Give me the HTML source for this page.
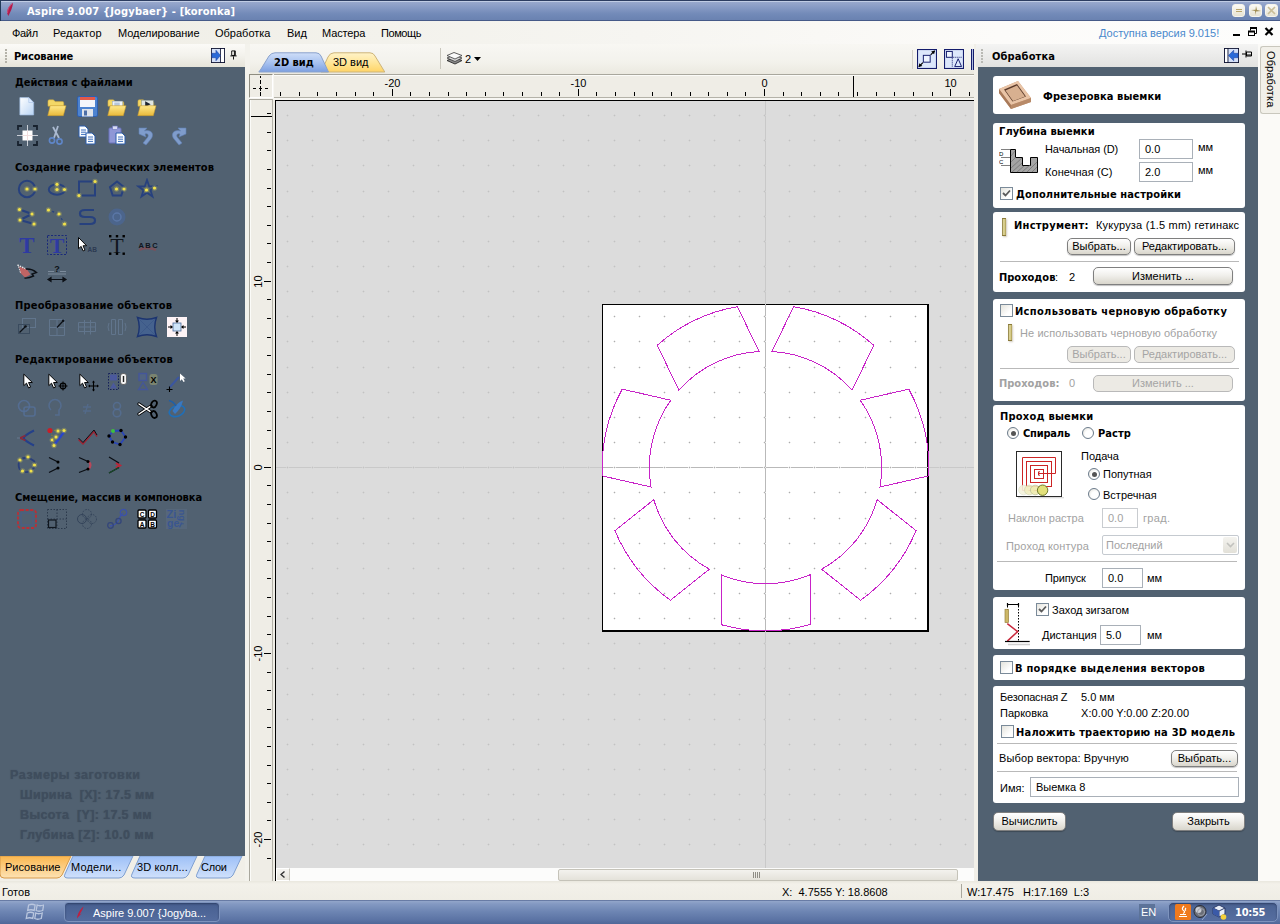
<!DOCTYPE html><html lang="ru"><head><meta charset="utf-8"><title>Aspire 9.007 {Jogybaer} - [koronka]</title><style>
*{box-sizing:border-box;margin:0;padding:0}
html,body{width:1280px;height:924px;overflow:hidden;background:#efede5}
body{font-family:"Liberation Sans",sans-serif;font-size:11px;color:#000;position:relative;line-height:13px}
.a{position:absolute}
.b{font-family:"DejaVu Sans Condensed","Liberation Sans",sans-serif;font-weight:bold;font-size:11px}
.t{position:absolute;white-space:nowrap;line-height:13px;height:13px}
.card{position:absolute;background:#fff;border-radius:3px}
.inp{position:absolute;background:#fff;border:1px solid #a9b0b8;height:20px;padding:3px 0 0 5px;line-height:13px;white-space:nowrap}
.btn{position:absolute;border:1px solid #7f7f7f;border-radius:5px;background:linear-gradient(#ffffff,#f1f0ec 45%,#d9d6cc);text-align:center;white-space:nowrap;line-height:15px;box-shadow:0 1px 1px rgba(0,0,0,.25)}
.btn.dis{color:#a5a5a5;border-color:#b9b9b9;background:#eceae4;box-shadow:none}
.cb{position:absolute;width:13px;height:13px;border:1px solid #7a8a99;background:linear-gradient(135deg,#e4e3dc,#ffffff 70%)}
.rd{position:absolute;width:12px;height:12px;border:1px solid #6b7b8b;border-radius:50%;background:radial-gradient(circle at 60% 60%,#ffffff 40%,#dddcd4)}
.sep{position:absolute;height:1px;background:#b9b9b9}
.g{color:#a2a2a2}
.hd{position:absolute;white-space:nowrap;line-height:13px;color:#000}
</style></head><body>
<div class="a" style="left:0;top:0;width:1280px;height:21px;background:linear-gradient(#2c3c60 0,#2c3c60 1px,#c0cce4 1px,#c0cce4 2px,#98a8cc 2px,#8599c3 8px,#728ab8 14px,#6a82b1 20px,#465a88 20px,#465a88 21px);border-left:1px solid #223a58"></div>
<svg class="a" style="left:0;top:0" width="20" height="20" viewBox="0 0 20 20"><path d="M13 2.800C10 4.500 6.800 9 7.100 13L8.300 15.900C10.200 12.500 12.600 8 13 2.800Z" fill="#b21a4a"/><path d="M12.500 3.500C10 5.500 7.500 9 7.500 13" stroke="#d8608a" stroke-width=".7" fill="none"/></svg>
<div class="t b" style="left:27px;top:5px;letter-spacing:0.169px;color:#fff">Aspire 9.007 {Jogybaer} - [koronka]</div>
<div class="a" style="left:1232px;top:4px;width:13px;height:13px;border-radius:3px;background:linear-gradient(#fbfaf5,#e6e2d2);border:1px solid #f6f4ec"></div>
<div class="a" style="left:1249px;top:4px;width:13px;height:13px;border-radius:3px;background:linear-gradient(#fbfaf5,#e6e2d2);border:1px solid #f6f4ec"></div>
<div class="a" style="left:1265px;top:4px;width:13px;height:13px;border-radius:3px;background:linear-gradient(#fbfaf5,#e6e2d2);border:1px solid #f6f4ec"></div>
<div class="a" style="left:1236px;top:9px;width:6px;height:3px;border-top:1px solid #b9a56c;border-bottom:1px solid #b9a56c"></div>
<svg class="a" style="left:1251px;top:6px" width="10" height="9" viewBox="0 0 10 9"><path d="M5 0L6 4L10 5L5 5.5L4.5 9L4 5L0 4L4.5 3.8Z" fill="#a08c50"/></svg>
<svg class="a" style="left:1267px;top:6px" width="9" height="9" viewBox="0 0 9 9"><path d="M1 1L8 8M8 1L1 8" stroke="#c9bd98" stroke-width="1.6"/></svg>
<div class="a" style="left:0;top:21px;width:1280px;height:23px;background:linear-gradient(90deg,#efede5 0,#f3f2ec 30%,#f6f5f1 50%,#fcfbf9 78%,#fdfdfc)"></div>
<div class="t " style="left:12px;top:27px;letter-spacing:-0.312px;">Файл</div>
<div class="t " style="left:53px;top:27px;letter-spacing:0.18px;">Редактор</div>
<div class="t " style="left:118px;top:27px;letter-spacing:-0.062px;">Моделирование</div>
<div class="t " style="left:215px;top:27px;">Обработка</div>
<div class="t " style="left:287px;top:27px;">Вид</div>
<div class="t " style="left:322px;top:27px;letter-spacing:-0.139px;">Мастера</div>
<div class="t " style="left:381px;top:27px;letter-spacing:-0.417px;">Помощь</div>
<div class="t " style="left:1099px;top:27px;color:#4888cc">Доступна версия 9.015!</div>
<div class="a" style="left:1233px;top:34px;width:7px;height:2px;background:#000"></div>
<svg class="a" style="left:1247px;top:27px" width="11" height="10" viewBox="0 0 11 10"><path d="M3.5 1.5H9.5V6.5H7.5M3.5 1.5V3.5" fill="none" stroke="#000" stroke-width="1"/><path d="M3 1H10" stroke="#000" stroke-width="2"/><rect x="1.5" y="4.5" width="6" height="4" fill="none" stroke="#000"/><path d="M1 4.5H8" stroke="#000" stroke-width="2"/></svg>
<svg class="a" style="left:1264px;top:27px" width="10" height="9" viewBox="0 0 10 9"><path d="M1.5 1L8.5 8M8.5 1L1.5 8" stroke="#000" stroke-width="2.2"/></svg>
<div class="a" style="left:0;top:44px;width:245px;height:23px;background:linear-gradient(#fbfaf7,#f3f2ec 50%,#e6e4da)"></div>
<div class="a" style="left:5px;top:49px;width:2px;height:2px;background:#b4b2a8"></div>
<div class="a" style="left:5px;top:52px;width:2px;height:2px;background:#b4b2a8"></div>
<div class="a" style="left:5px;top:55px;width:2px;height:2px;background:#b4b2a8"></div>
<div class="a" style="left:5px;top:58px;width:2px;height:2px;background:#b4b2a8"></div>
<div class="a" style="left:5px;top:61px;width:2px;height:2px;background:#b4b2a8"></div>
<div class="t b" style="left:14px;top:50px;letter-spacing:-0.131px;">Рисование</div>
<svg class="a" style="left:211px;top:48px" width="14" height="15" viewBox="0 0 17 17" preserveAspectRatio="none"><rect x="0.5" y="0.5" width="16" height="16" fill="#d4e0f8" stroke="#0c1030"/><rect x="11.5" y="0.5" width="5" height="16" fill="#fff" stroke="#0c1030"/><path d="M1 6H6V2.5L11.5 8.5L6 14.5V11H1Z" fill="#2a6ad8" stroke="#1c3c9a" stroke-width=".6"/></svg>
<svg class="a" style="left:229px;top:50px" width="9" height="10" viewBox="0 0 9 11"><path d="M2.5 1H6.5V6H2.5ZM5.5 1V6M1 6.5H8M4.5 7V10.5" fill="none" stroke="#000" stroke-width="1"/></svg>
<div class="a" style="left:0;top:67px;width:245px;height:790px;background:#516171"></div>
<div class="a" style="left:245px;top:44px;width:5px;height:837px;background:#f3f2ec"></div>
<div class="t b" style="left:15px;top:76px;letter-spacing:-0.069px;">Действия с файлами</div>
<div class="t b" style="left:15px;top:161px;letter-spacing:0.059px;">Создание графических элементов</div>
<div class="t b" style="left:15px;top:299px;letter-spacing:0.215px;">Преобразование объектов</div>
<div class="t b" style="left:15px;top:353px;letter-spacing:0.253px;">Редактирование объектов</div>
<div class="t b" style="left:15px;top:491px;letter-spacing:-0.085px;">Смещение, массив и компоновка</div>
<svg class="a" style="left:19px;top:97px" width="16" height="19" viewBox="0 0 18 21"><defs><linearGradient id="gd" x1="0" y1="0" x2="1" y2="1"><stop offset="0" stop-color="#ffffff"/><stop offset="1" stop-color="#b9d4f4"/></linearGradient></defs><path d="M1 0.5H11L16.5 6V20H1Z" fill="url(#gd)" stroke="#9fbbe0" stroke-width=".8"/><path d="M11 0.5V6H16.5Z" fill="#dceaff" stroke="#9fbbe0" stroke-width=".6"/></svg>
<svg class="a" style="left:47px;top:98px" width="20" height="19" viewBox="0 0 22 21"><defs><linearGradient id="gf" x1="0" y1="0" x2="0" y2="1"><stop offset="0" stop-color="#ffe98a"/><stop offset="1" stop-color="#e9b93a"/></linearGradient></defs><path d="M1 3.5Q1 2 2.5 2H7L9 4H17Q18.5 4 18.5 5.5V9H1Z" fill="#f3d766" stroke="#c9a23a" stroke-width=".6"/><path d="M0.8 19.5L3.5 8.5H21L18 19.5Z" fill="url(#gf)" stroke="#c99a2a" stroke-width=".6"/></svg>
<svg class="a" style="left:77px;top:96px" width="21" height="21" viewBox="0 0 21 21" ><rect x="0.5" y="0.5" width="20" height="20" rx="1.5" fill="#4d83d0" stroke="#2f5fae"/><rect x="3" y="1" width="15" height="10" fill="#f4f6fb"/><rect x="3" y="1" width="15" height="3" fill="#e2594a"/><rect x="5" y="13" width="11" height="7.5" fill="#dfe3ea"/><rect x="7" y="14.5" width="3" height="5" fill="#4d6ea6"/></svg>
<svg class="a" style="left:107px;top:98px" width="20" height="19" viewBox="0 0 22 21"><defs><linearGradient id="gf" x1="0" y1="0" x2="0" y2="1"><stop offset="0" stop-color="#ffe98a"/><stop offset="1" stop-color="#e9b93a"/></linearGradient></defs><path d="M1 3.5Q1 2 2.5 2H7L9 4H17Q18.5 4 18.5 5.5V9H1Z" fill="#f3d766" stroke="#c9a23a" stroke-width=".6"/><rect x="6" y="3.5" width="11" height="7" fill="#eef3fa" stroke="#8aa0c0" stroke-width=".5"/><rect x="8" y="5" width="6" height="4" fill="#b6c6dc"/><path d="M0.8 19.5L3.5 8.5H21L18 19.5Z" fill="url(#gf)" stroke="#c99a2a" stroke-width=".6"/></svg>
<svg class="a" style="left:137px;top:98px" width="20" height="19" viewBox="0 0 22 21"><defs><linearGradient id="gf" x1="0" y1="0" x2="0" y2="1"><stop offset="0" stop-color="#ffe98a"/><stop offset="1" stop-color="#e9b93a"/></linearGradient></defs><path d="M1 3.5Q1 2 2.5 2H7L9 4H17Q18.5 4 18.5 5.5V9H1Z" fill="#f3d766" stroke="#c9a23a" stroke-width=".6"/><rect x="5" y="2.5" width="13" height="8" fill="#dfe6e2" stroke="#7a8c8a" stroke-width=".5"/><path d="M9 3.5L15 7L9 10Z" fill="#1d2430"/><path d="M0.8 19.5L3.5 8.5H21L18 19.5Z" fill="url(#gf)" stroke="#c99a2a" stroke-width=".6"/></svg>
<svg class="a" style="left:17px;top:125px" width="21" height="21" viewBox="0 0 21 21" ><path d="M1 5V1H5M16 1H20V5M20 16V20H16M5 20H1V16" fill="none" stroke="#18222e" stroke-width="1.8"/><path d="M10.5 0V21M0 10.5H21" stroke="#c9ced6" stroke-width="1"/><rect x="5.5" y="5.5" width="10" height="10" fill="#fff"/><path d="M10.5 5.5V15.5M5.5 10.5H15.5" stroke="#f0dede" stroke-width="1"/></svg>
<svg class="a" style="left:48px;top:125px" width="18" height="21" viewBox="0 0 18 21" ><path d="M10 1L6 13M5 2L11 13" stroke="#aab9d0" stroke-width="1.8" fill="none"/><circle cx="4" cy="15.5" r="2.6" fill="none" stroke="#5f86c8" stroke-width="1.6"/><circle cx="11.5" cy="16.5" r="2.6" fill="none" stroke="#5f86c8" stroke-width="1.6"/></svg>
<svg class="a" style="left:78px;top:125px" width="19" height="21" viewBox="0 0 19 21" ><path d="M1 1H7L10 4V12H1Z" fill="#fbfdff" stroke="#2d5fae" stroke-width="1"/><path d="M3 5.0H8" stroke="#3d6fbe" stroke-width="1"/><path d="M3 7.2H8" stroke="#3d6fbe" stroke-width="1"/><path d="M3 9.4H8" stroke="#3d6fbe" stroke-width="1"/><path d="M8 8H14L17 11V19H8Z" fill="#fbfdff" stroke="#2d5fae" stroke-width="1"/><path d="M10 12.0H15" stroke="#3d6fbe" stroke-width="1"/><path d="M10 14.2H15" stroke="#3d6fbe" stroke-width="1"/><path d="M10 16.4H15" stroke="#3d6fbe" stroke-width="1"/></svg>
<svg class="a" style="left:108px;top:125px" width="19" height="21" viewBox="0 0 19 21" ><rect x="1" y="3" width="12" height="15" rx="1" fill="#8f97d6" stroke="#6a73bd"/><rect x="4.5" y="1" width="5" height="3.5" fill="#d8dcf4" stroke="#6a73bd" stroke-width=".6"/><path d="M8 8H14L17 11V19H8Z" fill="#fbfdff" stroke="#2d5fae" stroke-width="1"/><path d="M10 12.0H15" stroke="#3d6fbe" stroke-width="1"/><path d="M10 14.2H15" stroke="#3d6fbe" stroke-width="1"/><path d="M10 16.4H15" stroke="#3d6fbe" stroke-width="1"/></svg>
<svg class="a" style="left:138px;top:125px" width="19" height="21" viewBox="0 0 19 21" ><path d="M1 3L9 3L6.5 6C13 4 17 9 13 14L8 20L5 18L9.5 12.5C11.5 9.5 9 8 7 9L8 12L1 9Z" fill="#7f9ccb" stroke="#5f7fb4" stroke-width=".6"/></svg>
<svg class="a" style="left:168px;top:125px" width="19" height="21" viewBox="0 0 19 21" ><path d="M18 3L10 3L12.5 6C6 4 2 9 6 14L11 20L14 18L9.5 12.5C7.5 9.5 10 8 12 9L11 12L18 9Z" fill="#7f9ccb" stroke="#5f7fb4" stroke-width=".6"/></svg>
<svg class="a" style="left:16px;top:178px" width="22" height="22" viewBox="0 0 22 22" ><circle cx="11" cy="11" r="8.2" fill="none" stroke="#27417e" stroke-width="2"/><circle cx="11" cy="11" r="1.6" fill="#f2e24a"/><circle cx="11" cy="11" r="2.8" fill="#f2e24a" opacity=".25"/><circle cx="19" cy="11" r="1.6" fill="#f2e24a"/><circle cx="19" cy="11" r="2.8" fill="#f2e24a" opacity=".25"/></svg>
<svg class="a" style="left:46px;top:178px" width="22" height="22" viewBox="0 0 22 22" ><ellipse cx="11" cy="11.5" rx="8.2" ry="5.2" fill="none" stroke="#27417e" stroke-width="2"/><circle cx="11" cy="6.3" r="1.6" fill="#f2e24a"/><circle cx="11" cy="6.3" r="2.8" fill="#f2e24a" opacity=".25"/><circle cx="11" cy="11.5" r="1.6" fill="#f2e24a"/><circle cx="11" cy="11.5" r="2.8" fill="#f2e24a" opacity=".25"/><circle cx="18.5" cy="11.5" r="1.6" fill="#f2e24a"/><circle cx="18.5" cy="11.5" r="2.8" fill="#f2e24a" opacity=".25"/></svg>
<svg class="a" style="left:76px;top:178px" width="22" height="22" viewBox="0 0 22 22" ><rect x="3" y="3.5" width="16" height="14" fill="none" stroke="#27417e" stroke-width="2"/><circle cx="19" cy="3.5" r="1.6" fill="#f2e24a"/><circle cx="19" cy="3.5" r="2.8" fill="#f2e24a" opacity=".25"/><circle cx="3" cy="17.5" r="1.6" fill="#f2e24a"/><circle cx="3" cy="17.5" r="2.8" fill="#f2e24a" opacity=".25"/></svg>
<svg class="a" style="left:106px;top:178px" width="22" height="22" viewBox="0 0 22 22" ><path d="M11 3.5L18 9L15.3 17.5H6.7L4 9Z" fill="none" stroke="#27417e" stroke-width="2"/><circle cx="10.5" cy="11" r="1.6" fill="#f2e24a"/><circle cx="10.5" cy="11" r="2.8" fill="#f2e24a" opacity=".25"/><circle cx="18" cy="11" r="1.6" fill="#f2e24a"/><circle cx="18" cy="11" r="2.8" fill="#f2e24a" opacity=".25"/></svg>
<svg class="a" style="left:136px;top:178px" width="22" height="22" viewBox="0 0 22 22" ><path d="M11 2L13.2 8.3H19.8L14.5 12.2L16.5 18.5L11 14.7L5.5 18.5L7.5 12.2L2.2 8.3H8.8Z" fill="none" stroke="#27417e" stroke-width="1.8"/><circle cx="10.5" cy="12" r="1.6" fill="#f2e24a"/><circle cx="10.5" cy="12" r="2.8" fill="#f2e24a" opacity=".25"/><circle cx="18.5" cy="10" r="1.6" fill="#f2e24a"/><circle cx="18.5" cy="10" r="2.8" fill="#f2e24a" opacity=".25"/></svg>
<svg class="a" style="left:16px;top:206px" width="22" height="22" viewBox="0 0 22 22" ><path d="M3.5 3.5L16 8L4 14L18 18" fill="none" stroke="#27417e" stroke-width="2.2"/><circle cx="3.5" cy="3.5" r="1.6" fill="#f2e24a"/><circle cx="3.5" cy="3.5" r="2.8" fill="#f2e24a" opacity=".25"/><circle cx="16" cy="8" r="1.6" fill="#f2e24a"/><circle cx="16" cy="8" r="2.8" fill="#f2e24a" opacity=".25"/><circle cx="4" cy="14" r="1.6" fill="#f2e24a"/><circle cx="4" cy="14" r="2.8" fill="#f2e24a" opacity=".25"/><circle cx="18" cy="18" r="1.6" fill="#f2e24a"/><circle cx="18" cy="18" r="2.8" fill="#f2e24a" opacity=".25"/></svg>
<svg class="a" style="left:46px;top:206px" width="22" height="22" viewBox="0 0 22 22" ><path d="M2.5 4L13 8L18.5 18" fill="none" stroke="#27417e" stroke-width="1.2" stroke-dasharray="2 2"/><circle cx="2.5" cy="4" r="1.6" fill="#f2e24a"/><circle cx="2.5" cy="4" r="2.8" fill="#f2e24a" opacity=".25"/><circle cx="13" cy="8" r="1.6" fill="#f2e24a"/><circle cx="13" cy="8" r="2.8" fill="#f2e24a" opacity=".25"/><circle cx="18.5" cy="18" r="1.6" fill="#f2e24a"/><circle cx="18.5" cy="18" r="2.8" fill="#f2e24a" opacity=".25"/></svg>
<svg class="a" style="left:76px;top:206px" width="22" height="22" viewBox="0 0 22 22" ><path d="M18 4H9Q4 4 4 7.5Q4 11 9 11H14Q19 11 19 14.5Q19 18 14 18H3.5" fill="none" stroke="#27417e" stroke-width="2.2"/></svg>
<svg class="a" style="left:106px;top:206px" width="22" height="22" viewBox="0 0 22 22" ><circle cx="11" cy="11" r="8.5" fill="#4b6796" opacity=".75"/><circle cx="11" cy="11" r="4" fill="none" stroke="#5f7cae" stroke-width="1.5" opacity=".8"/></svg>
<svg class="a" style="left:16px;top:234px" width="22" height="22" viewBox="0 0 22 22" ><text x="11" y="19" text-anchor="middle" font-family="Liberation Serif,serif" font-weight="bold" font-size="23" fill="#2e3aa2">T</text></svg>
<svg class="a" style="left:46px;top:234px" width="22" height="22" viewBox="0 0 22 22" ><rect x="1.5" y="1.5" width="19" height="19" fill="none" stroke="#1a2a7a" stroke-width="1" stroke-dasharray="2 1.5"/><text x="11" y="19" text-anchor="middle" font-family="Liberation Serif,serif" font-weight="bold" font-size="22" fill="#2e3aa2">T</text></svg>
<svg class="a" style="left:76px;top:234px" width="22" height="22" viewBox="0 0 22 22" ><path d="M2.5 2.5V16.5L5.8 13.6L8.3 19.3L10.6 18.3L8.2 12.8H12.6Z" fill="#fff" stroke="#000" stroke-width="1.200" transform="translate(.5 1.500) scale(.8)"/><text x="11.500" y="17.500" font-family="Liberation Sans,sans-serif" font-weight="bold" font-size="6.500" fill="#2c3a52">AB</text></svg>
<svg class="a" style="left:106px;top:234px" width="22" height="22" viewBox="0 0 22 22" ><text x="11" y="18.5" text-anchor="middle" font-family="Liberation Serif,serif" font-size="22" fill="#10161e">T</text><rect x="3" y="1" width="2.4" height="2.4" fill="#000"/><rect x="9.8" y="1" width="2.4" height="2.4" fill="#000"/><rect x="16.5" y="1" width="2.4" height="2.4" fill="#000"/><rect x="3" y="18.5" width="2.4" height="2.4" fill="#000"/><rect x="9.8" y="18.5" width="2.4" height="2.4" fill="#000"/><rect x="16.5" y="18.5" width="2.4" height="2.4" fill="#000"/></svg>
<svg class="a" style="left:136px;top:234px" width="22" height="22" viewBox="0 0 22 22" ><path d="M3 16Q11 12 20 16" stroke="#8a4a52" stroke-width="2.4" fill="none" opacity=".7"/><text x="2.5" y="13.5" font-family="Liberation Sans,sans-serif" font-weight="bold" font-size="7.5" fill="#10161e" letter-spacing="1.4">ABC</text></svg>
<svg class="a" style="left:16px;top:262px" width="22" height="22" viewBox="0 0 22 22" ><path d="M3 4.500L11 7.500L14.500 12.500L9 15.500L4.500 11Z" fill="#c06464"/><path d="M1.500 3L9 6.500" stroke="#e8e8e8" stroke-width="1.400" stroke-dasharray="1.500 1"/><path d="M2.500 4.500L4.500 11" stroke="#dcdcdc" stroke-width="1" stroke-dasharray="1.500 1"/><path d="M10 7Q16 6.500 20.500 10.500L16 12L17.500 14Q12.500 16.500 8.500 16" fill="none" stroke="#0c1016" stroke-width="1.400"/></svg>
<svg class="a" style="left:46px;top:262px" width="22" height="22" viewBox="0 0 22 22" ><path d="M2 9.5H8M14 9.5H20M2 12H20" stroke="#7c8b9b" stroke-width="1"/><text x="11" y="10" text-anchor="middle" font-family="Liberation Sans,sans-serif" font-weight="bold" font-size="9" fill="#0c1016">?</text><path d="M2 17.5H20M2 17.5L5 15.5V19.5ZM20 17.5L17 15.5V19.5Z" stroke="#0c1016" stroke-width="1.2" fill="#0c1016"/></svg>
<svg class="a" style="left:16px;top:316px" width="22" height="22" viewBox="0 0 22 22" ><rect x="6.5" y="2.5" width="13" height="9" fill="none" stroke="#61758c"/><rect x="2.5" y="8.5" width="11" height="9" fill="none" stroke="#3a4b5e"/><path d="M3.5 16.5L9 11" stroke="#0c1016" stroke-width="1.2"/><circle cx="9.5" cy="10.5" r="1.3" fill="#0c1016"/></svg>
<svg class="a" style="left:46px;top:316px" width="22" height="22" viewBox="0 0 22 22" ><path d="M3.5 3.5H18.5V19.5H3.5ZM3.5 11.5H18.5M11 3.5V19.5" fill="none" stroke="#61758c"/><path d="M11 11.5L17 5" stroke="#0c1016" stroke-width="1.2"/><circle cx="17.2" cy="4.8" r="1.3" fill="#0c1016"/></svg>
<svg class="a" style="left:76px;top:316px" width="22" height="22" viewBox="0 0 22 22" ><path d="M2.5 6.5H19.5V15.5H2.5ZM8.5 4V18.5M14.5 4V18.5M2.5 11H19.5" fill="none" stroke="#61758c"/></svg>
<svg class="a" style="left:106px;top:316px" width="22" height="22" viewBox="0 0 22 22" ><path d="M5.5 3.5H9.5V18.5H5.5ZM12.5 3.5H16.5V18.5H12.5Z" fill="none" stroke="#61758c"/><path d="M3 7Q1 11 3 15M19 7Q21 11 19 15" fill="none" stroke="#61758c"/></svg>
<svg class="a" style="left:136px;top:316px" width="22" height="22" viewBox="0 0 22 22" ><path d="M1.5 1.5Q11 5 20.5 1.5Q17 11 20.5 20.5Q11 17 1.5 20.5Q5 11 1.5 1.5Z" fill="#45628e" stroke="#1c3470" stroke-width="1.4"/><path d="M3 3L19 19M19 3L3 19" stroke="#3a5686" stroke-width=".8"/></svg>
<svg class="a" style="left:167px;top:317px" width="20" height="20" viewBox="0 0 20 20" ><rect width="20" height="20" fill="#fdf3f6"/><rect x="6" y="6" width="8" height="8" fill="#cfe4f8" stroke="#4a6a9a" stroke-width=".8"/><path d="M10 1V5M10 19V15M1 10H5M19 10H15" stroke="#000" stroke-width="1"/><path d="M10 6L8 3.5H12ZM10 14L8 16.5H12ZM6 10L3.5 8V12ZM14 10L16.5 8V12Z" fill="#000"/></svg>
<svg class="a" style="left:22px;top:372px" width="14" height="20" viewBox="0 0 14 20" ><path d="M1 0.8V14.8L4.3 11.8L6.8 17.6L9.2 16.6L6.8 11H11.4Z" fill="#fff" stroke="#000" stroke-width="1.2" transform="translate(1 1.500) scale(.82)"/></svg>
<svg class="a" style="left:47px;top:372px" width="22" height="20" viewBox="0 0 22 20" ><path d="M1 0.8V14.8L4.3 11.8L6.8 17.6L9.2 16.6L6.8 11H11.4Z" fill="#fff" stroke="#000" stroke-width="1.2" transform="translate(1 1.500) scale(.82)"/><circle cx="16" cy="14" r="2.8" fill="none" stroke="#000" stroke-width="1.2"/><path d="M16 9.5V18.5M11.5 14H20.5" stroke="#000" stroke-width="1"/></svg>
<svg class="a" style="left:78px;top:372px" width="22" height="20" viewBox="0 0 22 20" ><path d="M1 0.8V14.8L4.3 11.8L6.8 17.6L9.2 16.6L6.8 11H11.4Z" fill="#fff" stroke="#000" stroke-width="1.2" transform="translate(1 1.500) scale(.82)"/><path d="M15.5 9.5V18.5M11 14H20" stroke="#000" stroke-width="1.1"/><path d="M15.5 8.5L14 10.5H17ZM15.5 19.5L14 17.5H17ZM10 14L12 12.5V15.5ZM21 14L19 12.5V15.5Z" fill="#000"/></svg>
<svg class="a" style="left:107px;top:372px" width="22" height="20" viewBox="0 0 22 20" ><path d="M1.5 1.5H11.5V17.5H1.5Z" fill="none" stroke="#14205a" stroke-dasharray="1.5 1.5"/><rect x="3" y="2.5" width="7" height="6" fill="#4a58a4" opacity=".85"/><path d="M3 16.5L6.5 10.5L10 16.5Z" fill="#4a58a4" opacity=".85"/><rect x="13.5" y="1.5" width="6" height="11" rx="2.5" fill="#f4f4f4" stroke="#555" stroke-width=".8"/><path d="M16.5 4V10" stroke="#222" stroke-width="1.4"/></svg>
<svg class="a" style="left:137px;top:372px" width="22" height="20" viewBox="0 0 22 20" ><rect x="2" y="1.5" width="7.5" height="7" fill="#56689c" fill-opacity=".4" stroke="#44569a" stroke-width="1.4"/><path d="M1.5 17.5L6 10.5L10.5 17.5Z" fill="none" stroke="#44569a" stroke-width="1.3"/><rect x="12.5" y="2" width="8" height="11" rx="2.5" fill="#7a8470"/><text x="16.5" y="11" text-anchor="middle" font-family="Liberation Sans,sans-serif" font-weight="bold" font-size="9" fill="#000">X</text></svg>
<svg class="a" style="left:166px;top:372px" width="22" height="20" viewBox="0 0 22 20" ><path d="M4 15L13 5" stroke="#3b56a0" stroke-width="2"/><path d="M0.5 17.5H6.5M3.5 14.5V20" stroke="#000" stroke-width="1.1"/><path d="M14 1.5V9L15.8 7.2L17.5 10L18.8 9.2L17.2 6.6H19.6Z" fill="#fff"/></svg>
<svg class="a" style="left:16px;top:398px" width="22" height="22" viewBox="0 0 22 22" ><circle cx="8" cy="8" r="5.5" fill="none" stroke="#55709a" stroke-width="1.6" opacity=".8"/><rect x="8" y="9" width="11" height="9" rx="2" fill="none" stroke="#55709a" stroke-width="1.6" opacity=".8"/></svg>
<svg class="a" style="left:46px;top:398px" width="22" height="22" viewBox="0 0 22 22" ><path d="M5 12A6 6 0 1 1 13 12V17H9" fill="none" stroke="#55709a" stroke-width="1.6" opacity=".7"/></svg>
<svg class="a" style="left:76px;top:398px" width="22" height="22" viewBox="0 0 22 22" ><path d="M7 9H15M7 13H15M12 6L9 16" fill="none" stroke="#55709a" stroke-width="1.4" opacity=".6"/></svg>
<svg class="a" style="left:106px;top:398px" width="22" height="22" viewBox="0 0 22 22" ><circle cx="11" cy="8" r="3.5" fill="none" stroke="#55709a" stroke-width="1.6" opacity=".7"/><circle cx="11" cy="15" r="3.8" fill="none" stroke="#55709a" stroke-width="1.6" opacity=".7"/></svg>
<svg class="a" style="left:137px;top:398px" width="22" height="22" viewBox="0 0 22 22" ><path d="M2 6L14 14M2 16L14 8" stroke="#000" stroke-width="3.2" stroke-linecap="round"/><path d="M2 6L13 13.4M2 16L13 8.6" stroke="#fff" stroke-width="1.5" stroke-linecap="round"/><ellipse cx="17" cy="6" rx="2.6" ry="3.6" fill="none" stroke="#000" stroke-width="1.8" transform="rotate(25 17 6)"/><ellipse cx="17" cy="16.5" rx="2.6" ry="3.6" fill="none" stroke="#000" stroke-width="1.8" transform="rotate(-25 17 16.5)"/></svg>
<svg class="a" style="left:166px;top:398px" width="22" height="22" viewBox="0 0 22 22" ><ellipse cx="11" cy="13" rx="8" ry="5.2" fill="none" stroke="#1f6fb8" stroke-width="1.6" transform="rotate(-20 11 13)"/><path d="M17 2.5Q10 5 6.5 13L9 16Q15 11 17 2.5Z" fill="#3a78c0"/><path d="M3 2.5Q8 4 10 8" stroke="#1f5fa8" stroke-width="1.4" fill="none"/></svg>
<svg class="a" style="left:16px;top:427px" width="22" height="22" viewBox="0 0 22 22" ><path d="M18 3.5Q9 8 7.5 11Q9 14 18 18.5" fill="none" stroke="#24408a" stroke-width="2"/><path d="M4 11L9.5 8.5M4 11L9.5 13.5" stroke="#8a2a3a" stroke-width="1.6"/><path d="M1 11H4" stroke="#667a90" stroke-width="1"/></svg>
<svg class="a" style="left:46px;top:427px" width="22" height="22" viewBox="0 0 22 22" ><path d="M5 3.5L20 3L8 19Z" fill="none" stroke="#8a8f2a" stroke-width="1" stroke-dasharray="1.5 1.5"/><path d="M18 5L9 17" stroke="#2a46c8" stroke-width="2.4"/><circle cx="4" cy="3.5" r="2.6" fill="#c81e28"/><circle cx="12" cy="4" r="1.5" fill="#f2e24a"/><circle cx="12" cy="4" r="2.7" fill="#f2e24a" opacity=".25"/><circle cx="18" cy="3.5" r="1.5" fill="#f2e24a"/><circle cx="18" cy="3.5" r="2.7" fill="#f2e24a" opacity=".25"/><circle cx="10" cy="10" r="1.5" fill="#f2e24a"/><circle cx="10" cy="10" r="2.7" fill="#f2e24a" opacity=".25"/><circle cx="8" cy="18.5" r="1.5" fill="#f2e24a"/><circle cx="8" cy="18.5" r="2.7" fill="#f2e24a" opacity=".25"/><circle cx="6" cy="13" r="1.3" fill="#f2e24a"/><circle cx="6" cy="13" r="2.5" fill="#f2e24a" opacity=".25"/></svg>
<svg class="a" style="left:76px;top:427px" width="22" height="22" viewBox="0 0 22 22" ><path d="M2.5 12.500L7 17L18 4.500L21 9.500" fill="none" stroke="#a02434" stroke-width="1.500"/><path d="M2.5 11L7 15.5L18 3L21 8" fill="none" stroke="#0a0e14" stroke-width="1"/></svg>
<svg class="a" style="left:106px;top:427px" width="22" height="22" viewBox="0 0 22 22" ><path d="M7 4L15 3.5L19.5 10L14 17.5L6.5 15L3 9Z" fill="none" stroke="#2a46b8" stroke-width="1.8"/><circle cx="15" cy="3.5" r="1.7" fill="#000"/><circle cx="19.5" cy="10" r="1.7" fill="#000"/><circle cx="14" cy="17.5" r="1.7" fill="#000"/><circle cx="6.5" cy="15" r="1.7" fill="#000"/><circle cx="3" cy="9" r="1.7" fill="#000"/><circle cx="7" cy="4" r="2" fill="#3ec03e"/></svg>
<svg class="a" style="left:16px;top:454px" width="22" height="22" viewBox="0 0 22 22" ><path d="M4 6Q11 1 18 7Q21 12 15 17Q8 20 3.5 15Q1.5 10 4 6Z" fill="none" stroke="#2a3f7a" stroke-width="1.8"/><circle cx="4" cy="6" r="1.6" fill="#f2e24a"/><circle cx="4" cy="6" r="2.8" fill="#f2e24a" opacity=".25"/><circle cx="12" cy="3" r="1.6" fill="#f2e24a"/><circle cx="12" cy="3" r="2.8" fill="#f2e24a" opacity=".25"/><circle cx="18.5" cy="11" r="1.6" fill="#f2e24a"/><circle cx="18.5" cy="11" r="2.8" fill="#f2e24a" opacity=".25"/><circle cx="15" cy="17" r="1.6" fill="#f2e24a"/><circle cx="15" cy="17" r="2.8" fill="#f2e24a" opacity=".25"/><circle cx="6.5" cy="17" r="1.6" fill="#f2e24a"/><circle cx="6.5" cy="17" r="2.8" fill="#f2e24a" opacity=".25"/></svg>
<svg class="a" style="left:46px;top:454px" width="22" height="22" viewBox="0 0 22 22" ><path d="M3 3.5L12 8M3 18.5L12 14" stroke="#0a0e14" stroke-width="1.3"/><circle cx="12" cy="8" r="1.5" fill="#000"/><circle cx="12" cy="14" r="1.5" fill="#000"/></svg>
<svg class="a" style="left:76px;top:454px" width="22" height="22" viewBox="0 0 22 22" ><path d="M12 7Q17 11 12 15.5" fill="none" stroke="#b8485a" stroke-width="2.2"/><path d="M3 3.5L12 7.5M3 18.5L12 15" stroke="#0a0e14" stroke-width="1.3"/><circle cx="12" cy="7.5" r="1.5" fill="#000"/><circle cx="12" cy="15" r="1.5" fill="#000"/></svg>
<svg class="a" style="left:106px;top:454px" width="22" height="22" viewBox="0 0 22 22" ><path d="M10 9L14 11.5L10 14" fill="none" stroke="#b8283a" stroke-width="2.2"/><path d="M3 3L13 9M3 19L13 13.5" stroke="#0a0e14" stroke-width="1.3"/><path d="M3 19L13 13.5" stroke="#1a4a2a" stroke-width="1.3"/></svg>
<svg class="a" style="left:16px;top:508px" width="22" height="22" viewBox="0 0 22 22" ><rect x="2" y="2" width="18" height="18" rx="3" fill="none" stroke="#b83038" stroke-width="1.8" stroke-dasharray="3 1.6"/><rect x="5" y="5" width="12" height="12" fill="none" stroke="#46608c" stroke-width="1"/></svg>
<svg class="a" style="left:46px;top:508px" width="22" height="22" viewBox="0 0 22 22" ><path d="M1.5 1.5H20.5V20.5H1.5ZM11 1.5V20.5M1.5 11H20.5" fill="none" stroke="#2c3a4c" stroke-width="1" stroke-dasharray="1.5 1.5"/><rect x="2.5" y="12" width="7.5" height="7.5" fill="none" stroke="#10161e" stroke-width="1.2"/></svg>
<svg class="a" style="left:76px;top:508px" width="22" height="22" viewBox="0 0 22 22" ><circle cx="11" cy="6" r="4.5" fill="none" stroke="#34445a" stroke-dasharray="1.5 1.2"/><circle cx="16" cy="11" r="4.5" fill="none" stroke="#34445a" stroke-dasharray="1.5 1.2"/><circle cx="11" cy="16" r="4.5" fill="none" stroke="#34445a" stroke-dasharray="1.5 1.2"/><circle cx="6" cy="11" r="4.5" fill="none" stroke="#34445a"/></svg>
<svg class="a" style="left:106px;top:508px" width="22" height="22" viewBox="0 0 22 22" ><path d="M4 18Q10 17 12 13Q14 8 17 5" fill="none" stroke="#3c52a8" stroke-width="1.4"/><circle cx="17.5" cy="4.5" r="3.2" fill="none" stroke="#3c52a8" stroke-width="1.3"/><circle cx="12.5" cy="13" r="2.6" fill="none" stroke="#34467a" stroke-width="1.3"/><circle cx="4.5" cy="17.5" r="2.8" fill="none" stroke="#34467a" stroke-width="1.3"/></svg>
<svg class="a" style="left:137px;top:509px" width="21" height="21" viewBox="0 0 21 21" ><rect x="1" y="1" width="8" height="8" rx="1" fill="#fff" stroke="#000" stroke-width="1.3"/><text x="5" y="7.8" text-anchor="middle" font-family="Liberation Sans,sans-serif" font-weight="bold" font-size="6.5" fill="#000">C</text><rect x="11.5" y="1" width="8" height="8" rx="1" fill="#fff" stroke="#000" stroke-width="1.3"/><text x="15.5" y="7.8" text-anchor="middle" font-family="Liberation Sans,sans-serif" font-weight="bold" font-size="6.5" fill="#000">D</text><rect x="1" y="11" width="8" height="8" rx="1" fill="#fff" stroke="#000" stroke-width="1.3"/><text x="5" y="17.8" text-anchor="middle" font-family="Liberation Sans,sans-serif" font-weight="bold" font-size="6.5" fill="#000">A</text><rect x="11.5" y="11" width="8" height="8" rx="1" fill="#fff" stroke="#000" stroke-width="1.3"/><text x="15.5" y="17.8" text-anchor="middle" font-family="Liberation Sans,sans-serif" font-weight="bold" font-size="6.5" fill="#000">B</text></svg>
<svg class="a" style="left:166px;top:508px" width="22" height="22" viewBox="0 0 22 22" ><rect x="0" y="1" width="21" height="20" fill="#5b6d85" opacity=".5"/><g font-family="Liberation Sans,sans-serif" font-weight="bold" fill="#3a5690"><text x="0.5" y="10" font-size="11">Zi</text><text transform="translate(12.500 1.500) rotate(90)" font-size="9.500">ng</text><text x="1" y="19" font-size="10.500">ge</text><text x="13" y="20" font-size="10" transform="rotate(25 15 17)">r</text></g></svg>
<div class="t" style="left:10px;top:768px;font-weight:bold;font-size:12.5px;line-height:14px;height:14px;color:#3f4d5d;letter-spacing:0.64px;text-shadow:0 0 1px #3f4d5d">Размеры заготовки</div>
<div class="t" style="left:20px;top:788px;font-weight:bold;font-size:12.5px;line-height:14px;height:14px;color:#3f4d5d;letter-spacing:0.33px;text-shadow:0 0 1px #3f4d5d">Ширина&nbsp; [X]: 17.5 мм</div>
<div class="t" style="left:20px;top:808px;font-weight:bold;font-size:12.5px;line-height:14px;height:14px;color:#3f4d5d;letter-spacing:0.37px;text-shadow:0 0 1px #3f4d5d">Высота&nbsp; [Y]: 17.5 мм</div>
<div class="t" style="left:20px;top:828px;font-weight:bold;font-size:12.5px;line-height:14px;height:14px;color:#3f4d5d;letter-spacing:0.47px;text-shadow:0 0 1px #3f4d5d">Глубина [Z]: 10.0 мм</div>
<div class="a" style="left:0;top:856px;width:245px;height:25px;background:#f1efe8"></div>
<svg class="a" style="left:0px;top:856px" width="246" height="24" viewBox="0 0 246 24" ><defs><linearGradient id="to" x1="0" y1="0" x2="0" y2="1"><stop offset="0" stop-color="#fbb74e"/><stop offset="1" stop-color="#fde2b4"/></linearGradient><linearGradient id="tb" x1="0" y1="0" x2="0" y2="1"><stop offset="0" stop-color="#9dc0f7"/><stop offset="1" stop-color="#d0e1fb"/></linearGradient></defs><path d="M205 0H242L233 19Q231 22 228 22H200Q195 22 197 18Z" fill="url(#tb)" stroke="#7f9fd0" stroke-width="1"/><path d="M140 0H197L188 19Q186 22 183 22H135Q130 22 132 18Z" fill="url(#tb)" stroke="#7f9fd0" stroke-width="1"/><path d="M73 0H133L124 19Q122 22 119 22H68Q63 22 65 18Z" fill="url(#tb)" stroke="#7f9fd0" stroke-width="1"/><path d="M0 0H71L62 19Q60 22 57 22H4Q0 22 0 18Z" fill="url(#to)" stroke="#d89a48" stroke-width="1"/></svg>
<div class="t " style="left:5px;top:861px;">Рисование</div>
<div class="t " style="left:71px;top:861px;letter-spacing:.15px">Модели...</div>
<div class="t " style="left:137px;top:861px;letter-spacing:.1px">3D колл...</div>
<div class="t " style="left:201px;top:861px;letter-spacing:-.3px">Слои</div>
<div class="a" style="left:250px;top:44px;width:726px;height:30px;background:linear-gradient(#f8f7f3,#f3f2ec 60%,#ebe9e0)"></div>
<svg class="a" style="left:258px;top:51px" width="135" height="23" viewBox="0 0 135 23" ><defs><linearGradient id="t2" x1="0" y1="0" x2="0" y2="1"><stop offset="0" stop-color="#cfdef8"/><stop offset=".5" stop-color="#a9c3f0"/><stop offset="1" stop-color="#7c9fe0"/></linearGradient><linearGradient id="t3" x1="0" y1="0" x2="0" y2="1"><stop offset="0" stop-color="#fff3c8"/><stop offset=".5" stop-color="#ffe69a"/><stop offset="1" stop-color="#ffd466"/></linearGradient></defs><path d="M63 21L70 6Q72 1.800 76 1.800H112Q115.500 1.800 117 5L126.800 21Z" fill="url(#t3)" stroke="#cdb47a" stroke-width="1"/><path d="M0.800 21L3 18L11 5Q13.500 1.800 17 1.800H58Q61.500 1.800 63 5L70.500 21Z" fill="url(#t2)" stroke="#8aa2cc" stroke-width="1"/></svg>
<div class="t b" style="left:274px;top:56px;">2D вид</div>
<div class="t " style="left:333px;top:56px;">3D вид</div>
<div class="a" style="left:440px;top:48px;width:1px;height:21px;background:#c9c7bd"></div>
<svg class="a" style="left:446px;top:51px" width="17" height="15" viewBox="0 0 17 15" ><path d="M1 9.500L8 6.500L16 9.500L9 13Z" fill="#8a8a8a" stroke="#2a2a2a" stroke-width=".9"/><path d="M1 7L8 4L16 7L9 10.500Z" fill="#d8d8d8" stroke="#3a3a3a" stroke-width=".8"/><path d="M1 4.500L8 1.500L16 4.500L9 8Z" fill="#fafafa" stroke="#3a3a3a" stroke-width=".8"/></svg>
<div class="t " style="left:465px;top:53px;">2</div>
<svg class="a" style="left:474px;top:57px" width="7" height="4"><path d="M0 0H7L3.5 4Z" fill="#000"/></svg>
<div class="a" style="left:912px;top:50px;width:1px;height:19px;background:#d3d1c8"></div>
<svg class="a" style="left:917px;top:49px" width="20" height="20" viewBox="0 0 20.5 20.5"><rect x="0.5" y="0.5" width="19.5" height="19.5" fill="#dce7fb" stroke="#141c6c" stroke-width="1.2"/><rect x="6.5" y="6.5" width="7" height="7" fill="#eef4ff" stroke="#141c6c"/><path d="M14 6L18 2M6 14L2 18" stroke="#000" stroke-width="1.2"/><path d="M18.5 1.5L14.5 2.5L17.5 5.5ZM1.5 18.5L5.5 17.5L2.5 14.5Z" fill="#000"/></svg>
<svg class="a" style="left:944px;top:49px" width="20" height="20" viewBox="0 0 20.5 20.5"><rect x="0.5" y="0.5" width="19.5" height="19.5" fill="#dce7fb" stroke="#141c6c" stroke-width="1.2"/><rect x="2.5" y="2.5" width="6" height="6" fill="#eef4ff" stroke="#141c6c"/><path d="M9 8.5H19M8.5 9V19" stroke="#141c6c" stroke-dasharray="1 1"/><path d="M11 18L14.5 10L18 18Z" fill="none" stroke="#141c6c"/></svg>
<div class="a" style="left:971px;top:49px;width:3px;height:21px;background:#aebbe0;border-left:1px solid #141c6c;border-right:1px solid #141c6c"></div>
<div class="a" style="left:249px;top:74px;width:725px;height:26px;background:#f7f6f2"></div>
<div class="a" style="left:249px;top:74px;width:24px;height:24px;background:#efede6;border-top:1px solid #8e8c80;border-left:1px solid #8e8c80;border-right:1px solid #fff;border-bottom:1px solid #fff"></div>
<svg class="a" style="left:250px;top:75px" width="22" height="22" viewBox="0 0 22 22" shape-rendering="crispEdges"><rect x="10" y="1" width="1" height="2" fill="#000"/><rect x="10" y="5" width="1" height="4" fill="#000"/><rect x="10" y="11" width="1" height="5" fill="#000"/><rect x="10" y="17" width="1" height="4" fill="#000"/><rect x="3" y="13" width="3" height="1" fill="#000"/><rect x="9" y="13" width="3" height="1" fill="#000"/><rect x="15" y="13" width="3" height="1" fill="#000"/></svg>
<svg class="a" style="left:274px;top:74px" width="700" height="24" viewBox="0 0 700 24" shape-rendering="crispEdges"><rect x="0" y="0" width="700" height="24" fill="#efede6"/><path d="M0 0.5H700" stroke="#a9a79d"/><path d="M0 1.5H700" stroke="#fbfbf8"/><path d="M0 23.5H700" stroke="#b4b2a8"/><rect x="6" y="18" width="1" height="4" fill="#000"/><rect x="25" y="18" width="1" height="4" fill="#000"/><rect x="43" y="18" width="1" height="4" fill="#000"/><rect x="62" y="18" width="1" height="4" fill="#000"/><rect x="81" y="18" width="1" height="4" fill="#000"/><rect x="99" y="18" width="1" height="4" fill="#000"/><rect x="118" y="15" width="1" height="7" fill="#000"/><text x="118.5" y="12.6" text-anchor="middle" font-family="Liberation Sans,sans-serif" font-size="11" fill="#000">-20</text><rect x="136" y="18" width="1" height="4" fill="#000"/><rect x="155" y="18" width="1" height="4" fill="#000"/><rect x="174" y="18" width="1" height="4" fill="#000"/><rect x="192" y="18" width="1" height="4" fill="#000"/><rect x="211" y="18" width="1" height="4" fill="#000"/><rect x="229" y="18" width="1" height="4" fill="#000"/><rect x="248" y="18" width="1" height="4" fill="#000"/><rect x="267" y="18" width="1" height="4" fill="#000"/><rect x="285" y="18" width="1" height="4" fill="#000"/><rect x="304" y="15" width="1" height="7" fill="#000"/><text x="304.5" y="12.6" text-anchor="middle" font-family="Liberation Sans,sans-serif" font-size="11" fill="#000">-10</text><rect x="322" y="18" width="1" height="4" fill="#000"/><rect x="341" y="18" width="1" height="4" fill="#000"/><rect x="360" y="18" width="1" height="4" fill="#000"/><rect x="378" y="18" width="1" height="4" fill="#000"/><rect x="397" y="18" width="1" height="4" fill="#000"/><rect x="416" y="18" width="1" height="4" fill="#000"/><rect x="434" y="18" width="1" height="4" fill="#000"/><rect x="453" y="18" width="1" height="4" fill="#000"/><rect x="471" y="18" width="1" height="4" fill="#000"/><rect x="490" y="15" width="1" height="7" fill="#000"/><text x="490.5" y="12.6" text-anchor="middle" font-family="Liberation Sans,sans-serif" font-size="11" fill="#000">0</text><rect x="509" y="18" width="1" height="4" fill="#000"/><rect x="527" y="18" width="1" height="4" fill="#000"/><rect x="546" y="18" width="1" height="4" fill="#000"/><rect x="564" y="18" width="1" height="4" fill="#000"/><rect x="583" y="18" width="1" height="4" fill="#000"/><rect x="602" y="18" width="1" height="4" fill="#000"/><rect x="620" y="18" width="1" height="4" fill="#000"/><rect x="639" y="18" width="1" height="4" fill="#000"/><rect x="658" y="18" width="1" height="4" fill="#000"/><rect x="676" y="15" width="1" height="7" fill="#000"/><text x="676.5" y="12.6" text-anchor="middle" font-family="Liberation Sans,sans-serif" font-size="11" fill="#000">10</text><rect x="695" y="18" width="1" height="4" fill="#000"/><rect x="579" y="2" width="1" height="21" fill="#000"/></svg>
<svg class="a" style="left:249px;top:99px" width="24" height="782" viewBox="0 0 24 782" shape-rendering="crispEdges"><rect x="0" y="0" width="24" height="782" fill="#efede6"/><path d="M0.5 0V782" stroke="#a9a79d"/><path d="M1.5 0V782" stroke="#fbfbf8"/><path d="M0 0.5H24" stroke="#a9a79d"/><path d="M23.5 0V782" stroke="#b4b2a8"/><rect x="18" y="759" width="4" height="1" fill="#000"/><rect x="15" y="740" width="7" height="1" fill="#000"/><text transform="translate(13.4 740.5) rotate(-90)" text-anchor="middle" font-family="Liberation Sans,sans-serif" font-size="11" fill="#000">-20</text><rect x="18" y="721" width="4" height="1" fill="#000"/><rect x="18" y="703" width="4" height="1" fill="#000"/><rect x="18" y="684" width="4" height="1" fill="#000"/><rect x="18" y="666" width="4" height="1" fill="#000"/><rect x="18" y="647" width="4" height="1" fill="#000"/><rect x="18" y="628" width="4" height="1" fill="#000"/><rect x="18" y="610" width="4" height="1" fill="#000"/><rect x="18" y="591" width="4" height="1" fill="#000"/><rect x="18" y="573" width="4" height="1" fill="#000"/><rect x="15" y="554" width="7" height="1" fill="#000"/><text transform="translate(13.4 554.5) rotate(-90)" text-anchor="middle" font-family="Liberation Sans,sans-serif" font-size="11" fill="#000">-10</text><rect x="18" y="535" width="4" height="1" fill="#000"/><rect x="18" y="517" width="4" height="1" fill="#000"/><rect x="18" y="498" width="4" height="1" fill="#000"/><rect x="18" y="479" width="4" height="1" fill="#000"/><rect x="18" y="461" width="4" height="1" fill="#000"/><rect x="18" y="442" width="4" height="1" fill="#000"/><rect x="18" y="424" width="4" height="1" fill="#000"/><rect x="18" y="405" width="4" height="1" fill="#000"/><rect x="18" y="386" width="4" height="1" fill="#000"/><rect x="15" y="368" width="7" height="1" fill="#000"/><text transform="translate(13.4 368.5) rotate(-90)" text-anchor="middle" font-family="Liberation Sans,sans-serif" font-size="11" fill="#000">0</text><rect x="18" y="349" width="4" height="1" fill="#000"/><rect x="18" y="331" width="4" height="1" fill="#000"/><rect x="18" y="312" width="4" height="1" fill="#000"/><rect x="18" y="293" width="4" height="1" fill="#000"/><rect x="18" y="275" width="4" height="1" fill="#000"/><rect x="18" y="256" width="4" height="1" fill="#000"/><rect x="18" y="238" width="4" height="1" fill="#000"/><rect x="18" y="219" width="4" height="1" fill="#000"/><rect x="18" y="200" width="4" height="1" fill="#000"/><rect x="15" y="182" width="7" height="1" fill="#000"/><text transform="translate(13.4 182.5) rotate(-90)" text-anchor="middle" font-family="Liberation Sans,sans-serif" font-size="11" fill="#000">10</text><rect x="18" y="163" width="4" height="1" fill="#000"/><rect x="18" y="144" width="4" height="1" fill="#000"/><rect x="18" y="126" width="4" height="1" fill="#000"/><rect x="18" y="107" width="4" height="1" fill="#000"/><rect x="18" y="89" width="4" height="1" fill="#000"/><rect x="18" y="70" width="4" height="1" fill="#000"/><rect x="18" y="51" width="4" height="1" fill="#000"/><rect x="18" y="33" width="4" height="1" fill="#000"/><rect x="18" y="14" width="4" height="1" fill="#000"/><rect x="2" y="17" width="21" height="1" fill="#000"/></svg>
<svg class="a" style="left:275px;top:100px" width="699" height="768" viewBox="0 0 699 768" ><rect x="0" y="0" width="699" height="768" fill="#dcdcdc"/><rect x="327" y="204" width="327" height="328" fill="#000"/><rect x="328" y="205" width="324" height="325" fill="#fff"/><rect x="490" y="1" width="1" height="768" fill="#c9c9c9"/><rect x="1" y="367" width="699" height="1" fill="#c9c9c9"/><rect x="490" y="205" width="1" height="325" fill="#b9b9b9"/><rect x="328" y="367" width="324" height="1" fill="#b9b9b9"/><path d="M11 15h3v1h-3zM12 14h1v3h-1zM11 40h3v1h-3zM12 39h1v3h-1zM11 65h3v1h-3zM12 64h1v3h-1zM11 91h3v1h-3zM12 90h1v3h-1zM11 116h3v1h-3zM12 115h1v3h-1zM11 141h3v1h-3zM12 140h1v3h-1zM11 166h3v1h-3zM12 165h1v3h-1zM11 191h3v1h-3zM12 190h1v3h-1zM11 216h3v1h-3zM12 215h1v3h-1zM11 241h3v1h-3zM12 240h1v3h-1zM11 267h3v1h-3zM12 266h1v3h-1zM11 292h3v1h-3zM12 291h1v3h-1zM11 317h3v1h-3zM12 316h1v3h-1zM11 342h3v1h-3zM12 341h1v3h-1zM11 367h3v1h-3zM12 366h1v3h-1zM11 392h3v1h-3zM12 391h1v3h-1zM11 418h3v1h-3zM12 417h1v3h-1zM11 443h3v1h-3zM12 442h1v3h-1zM11 468h3v1h-3zM12 467h1v3h-1zM11 493h3v1h-3zM12 492h1v3h-1zM11 518h3v1h-3zM12 517h1v3h-1zM11 543h3v1h-3zM12 542h1v3h-1zM11 568h3v1h-3zM12 567h1v3h-1zM11 594h3v1h-3zM12 593h1v3h-1zM11 619h3v1h-3zM12 618h1v3h-1zM11 644h3v1h-3zM12 643h1v3h-1zM11 669h3v1h-3zM12 668h1v3h-1zM11 694h3v1h-3zM12 693h1v3h-1zM11 719h3v1h-3zM12 718h1v3h-1zM11 744h3v1h-3zM12 743h1v3h-1zM36 15h3v1h-3zM37 14h1v3h-1zM36 40h3v1h-3zM37 39h1v3h-1zM36 65h3v1h-3zM37 64h1v3h-1zM36 91h3v1h-3zM37 90h1v3h-1zM36 116h3v1h-3zM37 115h1v3h-1zM36 141h3v1h-3zM37 140h1v3h-1zM36 166h3v1h-3zM37 165h1v3h-1zM36 191h3v1h-3zM37 190h1v3h-1zM36 216h3v1h-3zM37 215h1v3h-1zM36 241h3v1h-3zM37 240h1v3h-1zM36 267h3v1h-3zM37 266h1v3h-1zM36 292h3v1h-3zM37 291h1v3h-1zM36 317h3v1h-3zM37 316h1v3h-1zM36 342h3v1h-3zM37 341h1v3h-1zM36 367h3v1h-3zM37 366h1v3h-1zM36 392h3v1h-3zM37 391h1v3h-1zM36 418h3v1h-3zM37 417h1v3h-1zM36 443h3v1h-3zM37 442h1v3h-1zM36 468h3v1h-3zM37 467h1v3h-1zM36 493h3v1h-3zM37 492h1v3h-1zM36 518h3v1h-3zM37 517h1v3h-1zM36 543h3v1h-3zM37 542h1v3h-1zM36 568h3v1h-3zM37 567h1v3h-1zM36 594h3v1h-3zM37 593h1v3h-1zM36 619h3v1h-3zM37 618h1v3h-1zM36 644h3v1h-3zM37 643h1v3h-1zM36 669h3v1h-3zM37 668h1v3h-1zM36 694h3v1h-3zM37 693h1v3h-1zM36 719h3v1h-3zM37 718h1v3h-1zM36 744h3v1h-3zM37 743h1v3h-1zM61 15h3v1h-3zM62 14h1v3h-1zM61 40h3v1h-3zM62 39h1v3h-1zM61 65h3v1h-3zM62 64h1v3h-1zM61 91h3v1h-3zM62 90h1v3h-1zM61 116h3v1h-3zM62 115h1v3h-1zM61 141h3v1h-3zM62 140h1v3h-1zM61 166h3v1h-3zM62 165h1v3h-1zM61 191h3v1h-3zM62 190h1v3h-1zM61 216h3v1h-3zM62 215h1v3h-1zM61 241h3v1h-3zM62 240h1v3h-1zM61 267h3v1h-3zM62 266h1v3h-1zM61 292h3v1h-3zM62 291h1v3h-1zM61 317h3v1h-3zM62 316h1v3h-1zM61 342h3v1h-3zM62 341h1v3h-1zM61 367h3v1h-3zM62 366h1v3h-1zM61 392h3v1h-3zM62 391h1v3h-1zM61 418h3v1h-3zM62 417h1v3h-1zM61 443h3v1h-3zM62 442h1v3h-1zM61 468h3v1h-3zM62 467h1v3h-1zM61 493h3v1h-3zM62 492h1v3h-1zM61 518h3v1h-3zM62 517h1v3h-1zM61 543h3v1h-3zM62 542h1v3h-1zM61 568h3v1h-3zM62 567h1v3h-1zM61 594h3v1h-3zM62 593h1v3h-1zM61 619h3v1h-3zM62 618h1v3h-1zM61 644h3v1h-3zM62 643h1v3h-1zM61 669h3v1h-3zM62 668h1v3h-1zM61 694h3v1h-3zM62 693h1v3h-1zM61 719h3v1h-3zM62 718h1v3h-1zM61 744h3v1h-3zM62 743h1v3h-1zM87 15h3v1h-3zM88 14h1v3h-1zM87 40h3v1h-3zM88 39h1v3h-1zM87 65h3v1h-3zM88 64h1v3h-1zM87 91h3v1h-3zM88 90h1v3h-1zM87 116h3v1h-3zM88 115h1v3h-1zM87 141h3v1h-3zM88 140h1v3h-1zM87 166h3v1h-3zM88 165h1v3h-1zM87 191h3v1h-3zM88 190h1v3h-1zM87 216h3v1h-3zM88 215h1v3h-1zM87 241h3v1h-3zM88 240h1v3h-1zM87 267h3v1h-3zM88 266h1v3h-1zM87 292h3v1h-3zM88 291h1v3h-1zM87 317h3v1h-3zM88 316h1v3h-1zM87 342h3v1h-3zM88 341h1v3h-1zM87 367h3v1h-3zM88 366h1v3h-1zM87 392h3v1h-3zM88 391h1v3h-1zM87 418h3v1h-3zM88 417h1v3h-1zM87 443h3v1h-3zM88 442h1v3h-1zM87 468h3v1h-3zM88 467h1v3h-1zM87 493h3v1h-3zM88 492h1v3h-1zM87 518h3v1h-3zM88 517h1v3h-1zM87 543h3v1h-3zM88 542h1v3h-1zM87 568h3v1h-3zM88 567h1v3h-1zM87 594h3v1h-3zM88 593h1v3h-1zM87 619h3v1h-3zM88 618h1v3h-1zM87 644h3v1h-3zM88 643h1v3h-1zM87 669h3v1h-3zM88 668h1v3h-1zM87 694h3v1h-3zM88 693h1v3h-1zM87 719h3v1h-3zM88 718h1v3h-1zM87 744h3v1h-3zM88 743h1v3h-1zM112 15h3v1h-3zM113 14h1v3h-1zM112 40h3v1h-3zM113 39h1v3h-1zM112 65h3v1h-3zM113 64h1v3h-1zM112 91h3v1h-3zM113 90h1v3h-1zM112 116h3v1h-3zM113 115h1v3h-1zM112 141h3v1h-3zM113 140h1v3h-1zM112 166h3v1h-3zM113 165h1v3h-1zM112 191h3v1h-3zM113 190h1v3h-1zM112 216h3v1h-3zM113 215h1v3h-1zM112 241h3v1h-3zM113 240h1v3h-1zM112 267h3v1h-3zM113 266h1v3h-1zM112 292h3v1h-3zM113 291h1v3h-1zM112 317h3v1h-3zM113 316h1v3h-1zM112 342h3v1h-3zM113 341h1v3h-1zM112 367h3v1h-3zM113 366h1v3h-1zM112 392h3v1h-3zM113 391h1v3h-1zM112 418h3v1h-3zM113 417h1v3h-1zM112 443h3v1h-3zM113 442h1v3h-1zM112 468h3v1h-3zM113 467h1v3h-1zM112 493h3v1h-3zM113 492h1v3h-1zM112 518h3v1h-3zM113 517h1v3h-1zM112 543h3v1h-3zM113 542h1v3h-1zM112 568h3v1h-3zM113 567h1v3h-1zM112 594h3v1h-3zM113 593h1v3h-1zM112 619h3v1h-3zM113 618h1v3h-1zM112 644h3v1h-3zM113 643h1v3h-1zM112 669h3v1h-3zM113 668h1v3h-1zM112 694h3v1h-3zM113 693h1v3h-1zM112 719h3v1h-3zM113 718h1v3h-1zM112 744h3v1h-3zM113 743h1v3h-1zM137 15h3v1h-3zM138 14h1v3h-1zM137 40h3v1h-3zM138 39h1v3h-1zM137 65h3v1h-3zM138 64h1v3h-1zM137 91h3v1h-3zM138 90h1v3h-1zM137 116h3v1h-3zM138 115h1v3h-1zM137 141h3v1h-3zM138 140h1v3h-1zM137 166h3v1h-3zM138 165h1v3h-1zM137 191h3v1h-3zM138 190h1v3h-1zM137 216h3v1h-3zM138 215h1v3h-1zM137 241h3v1h-3zM138 240h1v3h-1zM137 267h3v1h-3zM138 266h1v3h-1zM137 292h3v1h-3zM138 291h1v3h-1zM137 317h3v1h-3zM138 316h1v3h-1zM137 342h3v1h-3zM138 341h1v3h-1zM137 367h3v1h-3zM138 366h1v3h-1zM137 392h3v1h-3zM138 391h1v3h-1zM137 418h3v1h-3zM138 417h1v3h-1zM137 443h3v1h-3zM138 442h1v3h-1zM137 468h3v1h-3zM138 467h1v3h-1zM137 493h3v1h-3zM138 492h1v3h-1zM137 518h3v1h-3zM138 517h1v3h-1zM137 543h3v1h-3zM138 542h1v3h-1zM137 568h3v1h-3zM138 567h1v3h-1zM137 594h3v1h-3zM138 593h1v3h-1zM137 619h3v1h-3zM138 618h1v3h-1zM137 644h3v1h-3zM138 643h1v3h-1zM137 669h3v1h-3zM138 668h1v3h-1zM137 694h3v1h-3zM138 693h1v3h-1zM137 719h3v1h-3zM138 718h1v3h-1zM137 744h3v1h-3zM138 743h1v3h-1zM162 15h3v1h-3zM163 14h1v3h-1zM162 40h3v1h-3zM163 39h1v3h-1zM162 65h3v1h-3zM163 64h1v3h-1zM162 91h3v1h-3zM163 90h1v3h-1zM162 116h3v1h-3zM163 115h1v3h-1zM162 141h3v1h-3zM163 140h1v3h-1zM162 166h3v1h-3zM163 165h1v3h-1zM162 191h3v1h-3zM163 190h1v3h-1zM162 216h3v1h-3zM163 215h1v3h-1zM162 241h3v1h-3zM163 240h1v3h-1zM162 267h3v1h-3zM163 266h1v3h-1zM162 292h3v1h-3zM163 291h1v3h-1zM162 317h3v1h-3zM163 316h1v3h-1zM162 342h3v1h-3zM163 341h1v3h-1zM162 367h3v1h-3zM163 366h1v3h-1zM162 392h3v1h-3zM163 391h1v3h-1zM162 418h3v1h-3zM163 417h1v3h-1zM162 443h3v1h-3zM163 442h1v3h-1zM162 468h3v1h-3zM163 467h1v3h-1zM162 493h3v1h-3zM163 492h1v3h-1zM162 518h3v1h-3zM163 517h1v3h-1zM162 543h3v1h-3zM163 542h1v3h-1zM162 568h3v1h-3zM163 567h1v3h-1zM162 594h3v1h-3zM163 593h1v3h-1zM162 619h3v1h-3zM163 618h1v3h-1zM162 644h3v1h-3zM163 643h1v3h-1zM162 669h3v1h-3zM163 668h1v3h-1zM162 694h3v1h-3zM163 693h1v3h-1zM162 719h3v1h-3zM163 718h1v3h-1zM162 744h3v1h-3zM163 743h1v3h-1zM187 15h3v1h-3zM188 14h1v3h-1zM187 40h3v1h-3zM188 39h1v3h-1zM187 65h3v1h-3zM188 64h1v3h-1zM187 91h3v1h-3zM188 90h1v3h-1zM187 116h3v1h-3zM188 115h1v3h-1zM187 141h3v1h-3zM188 140h1v3h-1zM187 166h3v1h-3zM188 165h1v3h-1zM187 191h3v1h-3zM188 190h1v3h-1zM187 216h3v1h-3zM188 215h1v3h-1zM187 241h3v1h-3zM188 240h1v3h-1zM187 267h3v1h-3zM188 266h1v3h-1zM187 292h3v1h-3zM188 291h1v3h-1zM187 317h3v1h-3zM188 316h1v3h-1zM187 342h3v1h-3zM188 341h1v3h-1zM187 367h3v1h-3zM188 366h1v3h-1zM187 392h3v1h-3zM188 391h1v3h-1zM187 418h3v1h-3zM188 417h1v3h-1zM187 443h3v1h-3zM188 442h1v3h-1zM187 468h3v1h-3zM188 467h1v3h-1zM187 493h3v1h-3zM188 492h1v3h-1zM187 518h3v1h-3zM188 517h1v3h-1zM187 543h3v1h-3zM188 542h1v3h-1zM187 568h3v1h-3zM188 567h1v3h-1zM187 594h3v1h-3zM188 593h1v3h-1zM187 619h3v1h-3zM188 618h1v3h-1zM187 644h3v1h-3zM188 643h1v3h-1zM187 669h3v1h-3zM188 668h1v3h-1zM187 694h3v1h-3zM188 693h1v3h-1zM187 719h3v1h-3zM188 718h1v3h-1zM187 744h3v1h-3zM188 743h1v3h-1zM212 15h3v1h-3zM213 14h1v3h-1zM212 40h3v1h-3zM213 39h1v3h-1zM212 65h3v1h-3zM213 64h1v3h-1zM212 91h3v1h-3zM213 90h1v3h-1zM212 116h3v1h-3zM213 115h1v3h-1zM212 141h3v1h-3zM213 140h1v3h-1zM212 166h3v1h-3zM213 165h1v3h-1zM212 191h3v1h-3zM213 190h1v3h-1zM212 216h3v1h-3zM213 215h1v3h-1zM212 241h3v1h-3zM213 240h1v3h-1zM212 267h3v1h-3zM213 266h1v3h-1zM212 292h3v1h-3zM213 291h1v3h-1zM212 317h3v1h-3zM213 316h1v3h-1zM212 342h3v1h-3zM213 341h1v3h-1zM212 367h3v1h-3zM213 366h1v3h-1zM212 392h3v1h-3zM213 391h1v3h-1zM212 418h3v1h-3zM213 417h1v3h-1zM212 443h3v1h-3zM213 442h1v3h-1zM212 468h3v1h-3zM213 467h1v3h-1zM212 493h3v1h-3zM213 492h1v3h-1zM212 518h3v1h-3zM213 517h1v3h-1zM212 543h3v1h-3zM213 542h1v3h-1zM212 568h3v1h-3zM213 567h1v3h-1zM212 594h3v1h-3zM213 593h1v3h-1zM212 619h3v1h-3zM213 618h1v3h-1zM212 644h3v1h-3zM213 643h1v3h-1zM212 669h3v1h-3zM213 668h1v3h-1zM212 694h3v1h-3zM213 693h1v3h-1zM212 719h3v1h-3zM213 718h1v3h-1zM212 744h3v1h-3zM213 743h1v3h-1zM237 15h3v1h-3zM238 14h1v3h-1zM237 40h3v1h-3zM238 39h1v3h-1zM237 65h3v1h-3zM238 64h1v3h-1zM237 91h3v1h-3zM238 90h1v3h-1zM237 116h3v1h-3zM238 115h1v3h-1zM237 141h3v1h-3zM238 140h1v3h-1zM237 166h3v1h-3zM238 165h1v3h-1zM237 191h3v1h-3zM238 190h1v3h-1zM237 216h3v1h-3zM238 215h1v3h-1zM237 241h3v1h-3zM238 240h1v3h-1zM237 267h3v1h-3zM238 266h1v3h-1zM237 292h3v1h-3zM238 291h1v3h-1zM237 317h3v1h-3zM238 316h1v3h-1zM237 342h3v1h-3zM238 341h1v3h-1zM237 367h3v1h-3zM238 366h1v3h-1zM237 392h3v1h-3zM238 391h1v3h-1zM237 418h3v1h-3zM238 417h1v3h-1zM237 443h3v1h-3zM238 442h1v3h-1zM237 468h3v1h-3zM238 467h1v3h-1zM237 493h3v1h-3zM238 492h1v3h-1zM237 518h3v1h-3zM238 517h1v3h-1zM237 543h3v1h-3zM238 542h1v3h-1zM237 568h3v1h-3zM238 567h1v3h-1zM237 594h3v1h-3zM238 593h1v3h-1zM237 619h3v1h-3zM238 618h1v3h-1zM237 644h3v1h-3zM238 643h1v3h-1zM237 669h3v1h-3zM238 668h1v3h-1zM237 694h3v1h-3zM238 693h1v3h-1zM237 719h3v1h-3zM238 718h1v3h-1zM237 744h3v1h-3zM238 743h1v3h-1zM262 15h3v1h-3zM263 14h1v3h-1zM262 40h3v1h-3zM263 39h1v3h-1zM262 65h3v1h-3zM263 64h1v3h-1zM262 91h3v1h-3zM263 90h1v3h-1zM262 116h3v1h-3zM263 115h1v3h-1zM262 141h3v1h-3zM263 140h1v3h-1zM262 166h3v1h-3zM263 165h1v3h-1zM262 191h3v1h-3zM263 190h1v3h-1zM262 216h3v1h-3zM263 215h1v3h-1zM262 241h3v1h-3zM263 240h1v3h-1zM262 267h3v1h-3zM263 266h1v3h-1zM262 292h3v1h-3zM263 291h1v3h-1zM262 317h3v1h-3zM263 316h1v3h-1zM262 342h3v1h-3zM263 341h1v3h-1zM262 367h3v1h-3zM263 366h1v3h-1zM262 392h3v1h-3zM263 391h1v3h-1zM262 418h3v1h-3zM263 417h1v3h-1zM262 443h3v1h-3zM263 442h1v3h-1zM262 468h3v1h-3zM263 467h1v3h-1zM262 493h3v1h-3zM263 492h1v3h-1zM262 518h3v1h-3zM263 517h1v3h-1zM262 543h3v1h-3zM263 542h1v3h-1zM262 568h3v1h-3zM263 567h1v3h-1zM262 594h3v1h-3zM263 593h1v3h-1zM262 619h3v1h-3zM263 618h1v3h-1zM262 644h3v1h-3zM263 643h1v3h-1zM262 669h3v1h-3zM263 668h1v3h-1zM262 694h3v1h-3zM263 693h1v3h-1zM262 719h3v1h-3zM263 718h1v3h-1zM262 744h3v1h-3zM263 743h1v3h-1zM287 15h3v1h-3zM288 14h1v3h-1zM287 40h3v1h-3zM288 39h1v3h-1zM287 65h3v1h-3zM288 64h1v3h-1zM287 91h3v1h-3zM288 90h1v3h-1zM287 116h3v1h-3zM288 115h1v3h-1zM287 141h3v1h-3zM288 140h1v3h-1zM287 166h3v1h-3zM288 165h1v3h-1zM287 191h3v1h-3zM288 190h1v3h-1zM287 216h3v1h-3zM288 215h1v3h-1zM287 241h3v1h-3zM288 240h1v3h-1zM287 267h3v1h-3zM288 266h1v3h-1zM287 292h3v1h-3zM288 291h1v3h-1zM287 317h3v1h-3zM288 316h1v3h-1zM287 342h3v1h-3zM288 341h1v3h-1zM287 367h3v1h-3zM288 366h1v3h-1zM287 392h3v1h-3zM288 391h1v3h-1zM287 418h3v1h-3zM288 417h1v3h-1zM287 443h3v1h-3zM288 442h1v3h-1zM287 468h3v1h-3zM288 467h1v3h-1zM287 493h3v1h-3zM288 492h1v3h-1zM287 518h3v1h-3zM288 517h1v3h-1zM287 543h3v1h-3zM288 542h1v3h-1zM287 568h3v1h-3zM288 567h1v3h-1zM287 594h3v1h-3zM288 593h1v3h-1zM287 619h3v1h-3zM288 618h1v3h-1zM287 644h3v1h-3zM288 643h1v3h-1zM287 669h3v1h-3zM288 668h1v3h-1zM287 694h3v1h-3zM288 693h1v3h-1zM287 719h3v1h-3zM288 718h1v3h-1zM287 744h3v1h-3zM288 743h1v3h-1zM312 15h3v1h-3zM313 14h1v3h-1zM312 40h3v1h-3zM313 39h1v3h-1zM312 65h3v1h-3zM313 64h1v3h-1zM312 91h3v1h-3zM313 90h1v3h-1zM312 116h3v1h-3zM313 115h1v3h-1zM312 141h3v1h-3zM313 140h1v3h-1zM312 166h3v1h-3zM313 165h1v3h-1zM312 191h3v1h-3zM313 190h1v3h-1zM312 216h3v1h-3zM313 215h1v3h-1zM312 241h3v1h-3zM313 240h1v3h-1zM312 267h3v1h-3zM313 266h1v3h-1zM312 292h3v1h-3zM313 291h1v3h-1zM312 317h3v1h-3zM313 316h1v3h-1zM312 342h3v1h-3zM313 341h1v3h-1zM312 367h3v1h-3zM313 366h1v3h-1zM312 392h3v1h-3zM313 391h1v3h-1zM312 418h3v1h-3zM313 417h1v3h-1zM312 443h3v1h-3zM313 442h1v3h-1zM312 468h3v1h-3zM313 467h1v3h-1zM312 493h3v1h-3zM313 492h1v3h-1zM312 518h3v1h-3zM313 517h1v3h-1zM312 543h3v1h-3zM313 542h1v3h-1zM312 568h3v1h-3zM313 567h1v3h-1zM312 594h3v1h-3zM313 593h1v3h-1zM312 619h3v1h-3zM313 618h1v3h-1zM312 644h3v1h-3zM313 643h1v3h-1zM312 669h3v1h-3zM313 668h1v3h-1zM312 694h3v1h-3zM313 693h1v3h-1zM312 719h3v1h-3zM313 718h1v3h-1zM312 744h3v1h-3zM313 743h1v3h-1zM338 15h3v1h-3zM339 14h1v3h-1zM338 40h3v1h-3zM339 39h1v3h-1zM338 65h3v1h-3zM339 64h1v3h-1zM338 91h3v1h-3zM339 90h1v3h-1zM338 116h3v1h-3zM339 115h1v3h-1zM338 141h3v1h-3zM339 140h1v3h-1zM338 166h3v1h-3zM339 165h1v3h-1zM338 191h3v1h-3zM339 190h1v3h-1zM338 543h3v1h-3zM339 542h1v3h-1zM338 568h3v1h-3zM339 567h1v3h-1zM338 594h3v1h-3zM339 593h1v3h-1zM338 619h3v1h-3zM339 618h1v3h-1zM338 644h3v1h-3zM339 643h1v3h-1zM338 669h3v1h-3zM339 668h1v3h-1zM338 694h3v1h-3zM339 693h1v3h-1zM338 719h3v1h-3zM339 718h1v3h-1zM338 744h3v1h-3zM339 743h1v3h-1zM363 15h3v1h-3zM364 14h1v3h-1zM363 40h3v1h-3zM364 39h1v3h-1zM363 65h3v1h-3zM364 64h1v3h-1zM363 91h3v1h-3zM364 90h1v3h-1zM363 116h3v1h-3zM364 115h1v3h-1zM363 141h3v1h-3zM364 140h1v3h-1zM363 166h3v1h-3zM364 165h1v3h-1zM363 191h3v1h-3zM364 190h1v3h-1zM363 543h3v1h-3zM364 542h1v3h-1zM363 568h3v1h-3zM364 567h1v3h-1zM363 594h3v1h-3zM364 593h1v3h-1zM363 619h3v1h-3zM364 618h1v3h-1zM363 644h3v1h-3zM364 643h1v3h-1zM363 669h3v1h-3zM364 668h1v3h-1zM363 694h3v1h-3zM364 693h1v3h-1zM363 719h3v1h-3zM364 718h1v3h-1zM363 744h3v1h-3zM364 743h1v3h-1zM388 15h3v1h-3zM389 14h1v3h-1zM388 40h3v1h-3zM389 39h1v3h-1zM388 65h3v1h-3zM389 64h1v3h-1zM388 91h3v1h-3zM389 90h1v3h-1zM388 116h3v1h-3zM389 115h1v3h-1zM388 141h3v1h-3zM389 140h1v3h-1zM388 166h3v1h-3zM389 165h1v3h-1zM388 191h3v1h-3zM389 190h1v3h-1zM388 543h3v1h-3zM389 542h1v3h-1zM388 568h3v1h-3zM389 567h1v3h-1zM388 594h3v1h-3zM389 593h1v3h-1zM388 619h3v1h-3zM389 618h1v3h-1zM388 644h3v1h-3zM389 643h1v3h-1zM388 669h3v1h-3zM389 668h1v3h-1zM388 694h3v1h-3zM389 693h1v3h-1zM388 719h3v1h-3zM389 718h1v3h-1zM388 744h3v1h-3zM389 743h1v3h-1zM413 15h3v1h-3zM414 14h1v3h-1zM413 40h3v1h-3zM414 39h1v3h-1zM413 65h3v1h-3zM414 64h1v3h-1zM413 91h3v1h-3zM414 90h1v3h-1zM413 116h3v1h-3zM414 115h1v3h-1zM413 141h3v1h-3zM414 140h1v3h-1zM413 166h3v1h-3zM414 165h1v3h-1zM413 191h3v1h-3zM414 190h1v3h-1zM413 543h3v1h-3zM414 542h1v3h-1zM413 568h3v1h-3zM414 567h1v3h-1zM413 594h3v1h-3zM414 593h1v3h-1zM413 619h3v1h-3zM414 618h1v3h-1zM413 644h3v1h-3zM414 643h1v3h-1zM413 669h3v1h-3zM414 668h1v3h-1zM413 694h3v1h-3zM414 693h1v3h-1zM413 719h3v1h-3zM414 718h1v3h-1zM413 744h3v1h-3zM414 743h1v3h-1zM438 15h3v1h-3zM439 14h1v3h-1zM438 40h3v1h-3zM439 39h1v3h-1zM438 65h3v1h-3zM439 64h1v3h-1zM438 91h3v1h-3zM439 90h1v3h-1zM438 116h3v1h-3zM439 115h1v3h-1zM438 141h3v1h-3zM439 140h1v3h-1zM438 166h3v1h-3zM439 165h1v3h-1zM438 191h3v1h-3zM439 190h1v3h-1zM438 543h3v1h-3zM439 542h1v3h-1zM438 568h3v1h-3zM439 567h1v3h-1zM438 594h3v1h-3zM439 593h1v3h-1zM438 619h3v1h-3zM439 618h1v3h-1zM438 644h3v1h-3zM439 643h1v3h-1zM438 669h3v1h-3zM439 668h1v3h-1zM438 694h3v1h-3zM439 693h1v3h-1zM438 719h3v1h-3zM439 718h1v3h-1zM438 744h3v1h-3zM439 743h1v3h-1zM463 15h3v1h-3zM464 14h1v3h-1zM463 40h3v1h-3zM464 39h1v3h-1zM463 65h3v1h-3zM464 64h1v3h-1zM463 91h3v1h-3zM464 90h1v3h-1zM463 116h3v1h-3zM464 115h1v3h-1zM463 141h3v1h-3zM464 140h1v3h-1zM463 166h3v1h-3zM464 165h1v3h-1zM463 191h3v1h-3zM464 190h1v3h-1zM463 543h3v1h-3zM464 542h1v3h-1zM463 568h3v1h-3zM464 567h1v3h-1zM463 594h3v1h-3zM464 593h1v3h-1zM463 619h3v1h-3zM464 618h1v3h-1zM463 644h3v1h-3zM464 643h1v3h-1zM463 669h3v1h-3zM464 668h1v3h-1zM463 694h3v1h-3zM464 693h1v3h-1zM463 719h3v1h-3zM464 718h1v3h-1zM463 744h3v1h-3zM464 743h1v3h-1zM488 15h3v1h-3zM489 14h1v3h-1zM488 40h3v1h-3zM489 39h1v3h-1zM488 65h3v1h-3zM489 64h1v3h-1zM488 91h3v1h-3zM489 90h1v3h-1zM488 116h3v1h-3zM489 115h1v3h-1zM488 141h3v1h-3zM489 140h1v3h-1zM488 166h3v1h-3zM489 165h1v3h-1zM488 191h3v1h-3zM489 190h1v3h-1zM488 543h3v1h-3zM489 542h1v3h-1zM488 568h3v1h-3zM489 567h1v3h-1zM488 594h3v1h-3zM489 593h1v3h-1zM488 619h3v1h-3zM489 618h1v3h-1zM488 644h3v1h-3zM489 643h1v3h-1zM488 669h3v1h-3zM489 668h1v3h-1zM488 694h3v1h-3zM489 693h1v3h-1zM488 719h3v1h-3zM489 718h1v3h-1zM488 744h3v1h-3zM489 743h1v3h-1zM513 15h3v1h-3zM514 14h1v3h-1zM513 40h3v1h-3zM514 39h1v3h-1zM513 65h3v1h-3zM514 64h1v3h-1zM513 91h3v1h-3zM514 90h1v3h-1zM513 116h3v1h-3zM514 115h1v3h-1zM513 141h3v1h-3zM514 140h1v3h-1zM513 166h3v1h-3zM514 165h1v3h-1zM513 191h3v1h-3zM514 190h1v3h-1zM513 543h3v1h-3zM514 542h1v3h-1zM513 568h3v1h-3zM514 567h1v3h-1zM513 594h3v1h-3zM514 593h1v3h-1zM513 619h3v1h-3zM514 618h1v3h-1zM513 644h3v1h-3zM514 643h1v3h-1zM513 669h3v1h-3zM514 668h1v3h-1zM513 694h3v1h-3zM514 693h1v3h-1zM513 719h3v1h-3zM514 718h1v3h-1zM513 744h3v1h-3zM514 743h1v3h-1zM538 15h3v1h-3zM539 14h1v3h-1zM538 40h3v1h-3zM539 39h1v3h-1zM538 65h3v1h-3zM539 64h1v3h-1zM538 91h3v1h-3zM539 90h1v3h-1zM538 116h3v1h-3zM539 115h1v3h-1zM538 141h3v1h-3zM539 140h1v3h-1zM538 166h3v1h-3zM539 165h1v3h-1zM538 191h3v1h-3zM539 190h1v3h-1zM538 543h3v1h-3zM539 542h1v3h-1zM538 568h3v1h-3zM539 567h1v3h-1zM538 594h3v1h-3zM539 593h1v3h-1zM538 619h3v1h-3zM539 618h1v3h-1zM538 644h3v1h-3zM539 643h1v3h-1zM538 669h3v1h-3zM539 668h1v3h-1zM538 694h3v1h-3zM539 693h1v3h-1zM538 719h3v1h-3zM539 718h1v3h-1zM538 744h3v1h-3zM539 743h1v3h-1zM563 15h3v1h-3zM564 14h1v3h-1zM563 40h3v1h-3zM564 39h1v3h-1zM563 65h3v1h-3zM564 64h1v3h-1zM563 91h3v1h-3zM564 90h1v3h-1zM563 116h3v1h-3zM564 115h1v3h-1zM563 141h3v1h-3zM564 140h1v3h-1zM563 166h3v1h-3zM564 165h1v3h-1zM563 191h3v1h-3zM564 190h1v3h-1zM563 543h3v1h-3zM564 542h1v3h-1zM563 568h3v1h-3zM564 567h1v3h-1zM563 594h3v1h-3zM564 593h1v3h-1zM563 619h3v1h-3zM564 618h1v3h-1zM563 644h3v1h-3zM564 643h1v3h-1zM563 669h3v1h-3zM564 668h1v3h-1zM563 694h3v1h-3zM564 693h1v3h-1zM563 719h3v1h-3zM564 718h1v3h-1zM563 744h3v1h-3zM564 743h1v3h-1zM589 15h3v1h-3zM590 14h1v3h-1zM589 40h3v1h-3zM590 39h1v3h-1zM589 65h3v1h-3zM590 64h1v3h-1zM589 91h3v1h-3zM590 90h1v3h-1zM589 116h3v1h-3zM590 115h1v3h-1zM589 141h3v1h-3zM590 140h1v3h-1zM589 166h3v1h-3zM590 165h1v3h-1zM589 191h3v1h-3zM590 190h1v3h-1zM589 543h3v1h-3zM590 542h1v3h-1zM589 568h3v1h-3zM590 567h1v3h-1zM589 594h3v1h-3zM590 593h1v3h-1zM589 619h3v1h-3zM590 618h1v3h-1zM589 644h3v1h-3zM590 643h1v3h-1zM589 669h3v1h-3zM590 668h1v3h-1zM589 694h3v1h-3zM590 693h1v3h-1zM589 719h3v1h-3zM590 718h1v3h-1zM589 744h3v1h-3zM590 743h1v3h-1zM614 15h3v1h-3zM615 14h1v3h-1zM614 40h3v1h-3zM615 39h1v3h-1zM614 65h3v1h-3zM615 64h1v3h-1zM614 91h3v1h-3zM615 90h1v3h-1zM614 116h3v1h-3zM615 115h1v3h-1zM614 141h3v1h-3zM615 140h1v3h-1zM614 166h3v1h-3zM615 165h1v3h-1zM614 191h3v1h-3zM615 190h1v3h-1zM614 543h3v1h-3zM615 542h1v3h-1zM614 568h3v1h-3zM615 567h1v3h-1zM614 594h3v1h-3zM615 593h1v3h-1zM614 619h3v1h-3zM615 618h1v3h-1zM614 644h3v1h-3zM615 643h1v3h-1zM614 669h3v1h-3zM615 668h1v3h-1zM614 694h3v1h-3zM615 693h1v3h-1zM614 719h3v1h-3zM615 718h1v3h-1zM614 744h3v1h-3zM615 743h1v3h-1zM639 15h3v1h-3zM640 14h1v3h-1zM639 40h3v1h-3zM640 39h1v3h-1zM639 65h3v1h-3zM640 64h1v3h-1zM639 91h3v1h-3zM640 90h1v3h-1zM639 116h3v1h-3zM640 115h1v3h-1zM639 141h3v1h-3zM640 140h1v3h-1zM639 166h3v1h-3zM640 165h1v3h-1zM639 191h3v1h-3zM640 190h1v3h-1zM639 543h3v1h-3zM640 542h1v3h-1zM639 568h3v1h-3zM640 567h1v3h-1zM639 594h3v1h-3zM640 593h1v3h-1zM639 619h3v1h-3zM640 618h1v3h-1zM639 644h3v1h-3zM640 643h1v3h-1zM639 669h3v1h-3zM640 668h1v3h-1zM639 694h3v1h-3zM640 693h1v3h-1zM639 719h3v1h-3zM640 718h1v3h-1zM639 744h3v1h-3zM640 743h1v3h-1zM664 15h3v1h-3zM665 14h1v3h-1zM664 40h3v1h-3zM665 39h1v3h-1zM664 65h3v1h-3zM665 64h1v3h-1zM664 91h3v1h-3zM665 90h1v3h-1zM664 116h3v1h-3zM665 115h1v3h-1zM664 141h3v1h-3zM665 140h1v3h-1zM664 166h3v1h-3zM665 165h1v3h-1zM664 191h3v1h-3zM665 190h1v3h-1zM664 216h3v1h-3zM665 215h1v3h-1zM664 241h3v1h-3zM665 240h1v3h-1zM664 267h3v1h-3zM665 266h1v3h-1zM664 292h3v1h-3zM665 291h1v3h-1zM664 317h3v1h-3zM665 316h1v3h-1zM664 342h3v1h-3zM665 341h1v3h-1zM664 367h3v1h-3zM665 366h1v3h-1zM664 392h3v1h-3zM665 391h1v3h-1zM664 418h3v1h-3zM665 417h1v3h-1zM664 443h3v1h-3zM665 442h1v3h-1zM664 468h3v1h-3zM665 467h1v3h-1zM664 493h3v1h-3zM665 492h1v3h-1zM664 518h3v1h-3zM665 517h1v3h-1zM664 543h3v1h-3zM665 542h1v3h-1zM664 568h3v1h-3zM665 567h1v3h-1zM664 594h3v1h-3zM665 593h1v3h-1zM664 619h3v1h-3zM665 618h1v3h-1zM664 644h3v1h-3zM665 643h1v3h-1zM664 669h3v1h-3zM665 668h1v3h-1zM664 694h3v1h-3zM665 693h1v3h-1zM664 719h3v1h-3zM665 718h1v3h-1zM664 744h3v1h-3zM665 743h1v3h-1zM689 15h3v1h-3zM690 14h1v3h-1zM689 40h3v1h-3zM690 39h1v3h-1zM689 65h3v1h-3zM690 64h1v3h-1zM689 91h3v1h-3zM690 90h1v3h-1zM689 116h3v1h-3zM690 115h1v3h-1zM689 141h3v1h-3zM690 140h1v3h-1zM689 166h3v1h-3zM690 165h1v3h-1zM689 191h3v1h-3zM690 190h1v3h-1zM689 216h3v1h-3zM690 215h1v3h-1zM689 241h3v1h-3zM690 240h1v3h-1zM689 267h3v1h-3zM690 266h1v3h-1zM689 292h3v1h-3zM690 291h1v3h-1zM689 317h3v1h-3zM690 316h1v3h-1zM689 342h3v1h-3zM690 341h1v3h-1zM689 367h3v1h-3zM690 366h1v3h-1zM689 392h3v1h-3zM690 391h1v3h-1zM689 418h3v1h-3zM690 417h1v3h-1zM689 443h3v1h-3zM690 442h1v3h-1zM689 468h3v1h-3zM690 467h1v3h-1zM689 493h3v1h-3zM690 492h1v3h-1zM689 518h3v1h-3zM690 517h1v3h-1zM689 543h3v1h-3zM690 542h1v3h-1zM689 568h3v1h-3zM690 567h1v3h-1zM689 594h3v1h-3zM690 593h1v3h-1zM689 619h3v1h-3zM690 618h1v3h-1zM689 644h3v1h-3zM690 643h1v3h-1zM689 669h3v1h-3zM690 668h1v3h-1zM689 694h3v1h-3zM690 693h1v3h-1zM689 719h3v1h-3zM690 718h1v3h-1zM689 744h3v1h-3zM690 743h1v3h-1z" fill="#d4d4d4"/><path d="M338 216h3v1h-3zM339 215h1v3h-1zM338 241h3v1h-3zM339 240h1v3h-1zM338 267h3v1h-3zM339 266h1v3h-1zM338 292h3v1h-3zM339 291h1v3h-1zM338 317h3v1h-3zM339 316h1v3h-1zM338 342h3v1h-3zM339 341h1v3h-1zM338 367h3v1h-3zM339 366h1v3h-1zM338 392h3v1h-3zM339 391h1v3h-1zM338 418h3v1h-3zM339 417h1v3h-1zM338 443h3v1h-3zM339 442h1v3h-1zM338 468h3v1h-3zM339 467h1v3h-1zM338 493h3v1h-3zM339 492h1v3h-1zM338 518h3v1h-3zM339 517h1v3h-1zM363 216h3v1h-3zM364 215h1v3h-1zM363 241h3v1h-3zM364 240h1v3h-1zM363 267h3v1h-3zM364 266h1v3h-1zM363 292h3v1h-3zM364 291h1v3h-1zM363 317h3v1h-3zM364 316h1v3h-1zM363 342h3v1h-3zM364 341h1v3h-1zM363 367h3v1h-3zM364 366h1v3h-1zM363 392h3v1h-3zM364 391h1v3h-1zM363 418h3v1h-3zM364 417h1v3h-1zM363 443h3v1h-3zM364 442h1v3h-1zM363 468h3v1h-3zM364 467h1v3h-1zM363 493h3v1h-3zM364 492h1v3h-1zM363 518h3v1h-3zM364 517h1v3h-1zM388 216h3v1h-3zM389 215h1v3h-1zM388 241h3v1h-3zM389 240h1v3h-1zM388 267h3v1h-3zM389 266h1v3h-1zM388 292h3v1h-3zM389 291h1v3h-1zM388 317h3v1h-3zM389 316h1v3h-1zM388 342h3v1h-3zM389 341h1v3h-1zM388 367h3v1h-3zM389 366h1v3h-1zM388 392h3v1h-3zM389 391h1v3h-1zM388 418h3v1h-3zM389 417h1v3h-1zM388 443h3v1h-3zM389 442h1v3h-1zM388 468h3v1h-3zM389 467h1v3h-1zM388 493h3v1h-3zM389 492h1v3h-1zM388 518h3v1h-3zM389 517h1v3h-1zM413 216h3v1h-3zM414 215h1v3h-1zM413 241h3v1h-3zM414 240h1v3h-1zM413 267h3v1h-3zM414 266h1v3h-1zM413 292h3v1h-3zM414 291h1v3h-1zM413 317h3v1h-3zM414 316h1v3h-1zM413 342h3v1h-3zM414 341h1v3h-1zM413 367h3v1h-3zM414 366h1v3h-1zM413 392h3v1h-3zM414 391h1v3h-1zM413 418h3v1h-3zM414 417h1v3h-1zM413 443h3v1h-3zM414 442h1v3h-1zM413 468h3v1h-3zM414 467h1v3h-1zM413 493h3v1h-3zM414 492h1v3h-1zM413 518h3v1h-3zM414 517h1v3h-1zM438 216h3v1h-3zM439 215h1v3h-1zM438 241h3v1h-3zM439 240h1v3h-1zM438 267h3v1h-3zM439 266h1v3h-1zM438 292h3v1h-3zM439 291h1v3h-1zM438 317h3v1h-3zM439 316h1v3h-1zM438 342h3v1h-3zM439 341h1v3h-1zM438 367h3v1h-3zM439 366h1v3h-1zM438 392h3v1h-3zM439 391h1v3h-1zM438 418h3v1h-3zM439 417h1v3h-1zM438 443h3v1h-3zM439 442h1v3h-1zM438 468h3v1h-3zM439 467h1v3h-1zM438 493h3v1h-3zM439 492h1v3h-1zM438 518h3v1h-3zM439 517h1v3h-1zM463 216h3v1h-3zM464 215h1v3h-1zM463 241h3v1h-3zM464 240h1v3h-1zM463 267h3v1h-3zM464 266h1v3h-1zM463 292h3v1h-3zM464 291h1v3h-1zM463 317h3v1h-3zM464 316h1v3h-1zM463 342h3v1h-3zM464 341h1v3h-1zM463 367h3v1h-3zM464 366h1v3h-1zM463 392h3v1h-3zM464 391h1v3h-1zM463 418h3v1h-3zM464 417h1v3h-1zM463 443h3v1h-3zM464 442h1v3h-1zM463 468h3v1h-3zM464 467h1v3h-1zM463 493h3v1h-3zM464 492h1v3h-1zM463 518h3v1h-3zM464 517h1v3h-1zM488 216h3v1h-3zM489 215h1v3h-1zM488 241h3v1h-3zM489 240h1v3h-1zM488 267h3v1h-3zM489 266h1v3h-1zM488 292h3v1h-3zM489 291h1v3h-1zM488 317h3v1h-3zM489 316h1v3h-1zM488 342h3v1h-3zM489 341h1v3h-1zM488 367h3v1h-3zM489 366h1v3h-1zM488 392h3v1h-3zM489 391h1v3h-1zM488 418h3v1h-3zM489 417h1v3h-1zM488 443h3v1h-3zM489 442h1v3h-1zM488 468h3v1h-3zM489 467h1v3h-1zM488 493h3v1h-3zM489 492h1v3h-1zM488 518h3v1h-3zM489 517h1v3h-1zM513 216h3v1h-3zM514 215h1v3h-1zM513 241h3v1h-3zM514 240h1v3h-1zM513 267h3v1h-3zM514 266h1v3h-1zM513 292h3v1h-3zM514 291h1v3h-1zM513 317h3v1h-3zM514 316h1v3h-1zM513 342h3v1h-3zM514 341h1v3h-1zM513 367h3v1h-3zM514 366h1v3h-1zM513 392h3v1h-3zM514 391h1v3h-1zM513 418h3v1h-3zM514 417h1v3h-1zM513 443h3v1h-3zM514 442h1v3h-1zM513 468h3v1h-3zM514 467h1v3h-1zM513 493h3v1h-3zM514 492h1v3h-1zM513 518h3v1h-3zM514 517h1v3h-1zM538 216h3v1h-3zM539 215h1v3h-1zM538 241h3v1h-3zM539 240h1v3h-1zM538 267h3v1h-3zM539 266h1v3h-1zM538 292h3v1h-3zM539 291h1v3h-1zM538 317h3v1h-3zM539 316h1v3h-1zM538 342h3v1h-3zM539 341h1v3h-1zM538 367h3v1h-3zM539 366h1v3h-1zM538 392h3v1h-3zM539 391h1v3h-1zM538 418h3v1h-3zM539 417h1v3h-1zM538 443h3v1h-3zM539 442h1v3h-1zM538 468h3v1h-3zM539 467h1v3h-1zM538 493h3v1h-3zM539 492h1v3h-1zM538 518h3v1h-3zM539 517h1v3h-1zM563 216h3v1h-3zM564 215h1v3h-1zM563 241h3v1h-3zM564 240h1v3h-1zM563 267h3v1h-3zM564 266h1v3h-1zM563 292h3v1h-3zM564 291h1v3h-1zM563 317h3v1h-3zM564 316h1v3h-1zM563 342h3v1h-3zM564 341h1v3h-1zM563 367h3v1h-3zM564 366h1v3h-1zM563 392h3v1h-3zM564 391h1v3h-1zM563 418h3v1h-3zM564 417h1v3h-1zM563 443h3v1h-3zM564 442h1v3h-1zM563 468h3v1h-3zM564 467h1v3h-1zM563 493h3v1h-3zM564 492h1v3h-1zM563 518h3v1h-3zM564 517h1v3h-1zM589 216h3v1h-3zM590 215h1v3h-1zM589 241h3v1h-3zM590 240h1v3h-1zM589 267h3v1h-3zM590 266h1v3h-1zM589 292h3v1h-3zM590 291h1v3h-1zM589 317h3v1h-3zM590 316h1v3h-1zM589 342h3v1h-3zM590 341h1v3h-1zM589 367h3v1h-3zM590 366h1v3h-1zM589 392h3v1h-3zM590 391h1v3h-1zM589 418h3v1h-3zM590 417h1v3h-1zM589 443h3v1h-3zM590 442h1v3h-1zM589 468h3v1h-3zM590 467h1v3h-1zM589 493h3v1h-3zM590 492h1v3h-1zM589 518h3v1h-3zM590 517h1v3h-1zM614 216h3v1h-3zM615 215h1v3h-1zM614 241h3v1h-3zM615 240h1v3h-1zM614 267h3v1h-3zM615 266h1v3h-1zM614 292h3v1h-3zM615 291h1v3h-1zM614 317h3v1h-3zM615 316h1v3h-1zM614 342h3v1h-3zM615 341h1v3h-1zM614 367h3v1h-3zM615 366h1v3h-1zM614 392h3v1h-3zM615 391h1v3h-1zM614 418h3v1h-3zM615 417h1v3h-1zM614 443h3v1h-3zM615 442h1v3h-1zM614 468h3v1h-3zM615 467h1v3h-1zM614 493h3v1h-3zM615 492h1v3h-1zM614 518h3v1h-3zM615 517h1v3h-1zM639 216h3v1h-3zM640 215h1v3h-1zM639 241h3v1h-3zM640 240h1v3h-1zM639 267h3v1h-3zM640 266h1v3h-1zM639 292h3v1h-3zM640 291h1v3h-1zM639 317h3v1h-3zM640 316h1v3h-1zM639 342h3v1h-3zM640 341h1v3h-1zM639 367h3v1h-3zM640 366h1v3h-1zM639 392h3v1h-3zM640 391h1v3h-1zM639 418h3v1h-3zM640 417h1v3h-1zM639 443h3v1h-3zM640 442h1v3h-1zM639 468h3v1h-3zM640 467h1v3h-1zM639 493h3v1h-3zM640 492h1v3h-1zM639 518h3v1h-3zM640 517h1v3h-1z" fill="#ececec"/><path d="M12 15h1v1h-1zM12 40h1v1h-1zM12 65h1v1h-1zM12 91h1v1h-1zM12 116h1v1h-1zM12 141h1v1h-1zM12 166h1v1h-1zM12 191h1v1h-1zM12 216h1v1h-1zM12 241h1v1h-1zM12 267h1v1h-1zM12 292h1v1h-1zM12 317h1v1h-1zM12 342h1v1h-1zM12 367h1v1h-1zM12 392h1v1h-1zM12 418h1v1h-1zM12 443h1v1h-1zM12 468h1v1h-1zM12 493h1v1h-1zM12 518h1v1h-1zM12 543h1v1h-1zM12 568h1v1h-1zM12 594h1v1h-1zM12 619h1v1h-1zM12 644h1v1h-1zM12 669h1v1h-1zM12 694h1v1h-1zM12 719h1v1h-1zM12 744h1v1h-1zM37 15h1v1h-1zM37 40h1v1h-1zM37 65h1v1h-1zM37 91h1v1h-1zM37 116h1v1h-1zM37 141h1v1h-1zM37 166h1v1h-1zM37 191h1v1h-1zM37 216h1v1h-1zM37 241h1v1h-1zM37 267h1v1h-1zM37 292h1v1h-1zM37 317h1v1h-1zM37 342h1v1h-1zM37 367h1v1h-1zM37 392h1v1h-1zM37 418h1v1h-1zM37 443h1v1h-1zM37 468h1v1h-1zM37 493h1v1h-1zM37 518h1v1h-1zM37 543h1v1h-1zM37 568h1v1h-1zM37 594h1v1h-1zM37 619h1v1h-1zM37 644h1v1h-1zM37 669h1v1h-1zM37 694h1v1h-1zM37 719h1v1h-1zM37 744h1v1h-1zM62 15h1v1h-1zM62 40h1v1h-1zM62 65h1v1h-1zM62 91h1v1h-1zM62 116h1v1h-1zM62 141h1v1h-1zM62 166h1v1h-1zM62 191h1v1h-1zM62 216h1v1h-1zM62 241h1v1h-1zM62 267h1v1h-1zM62 292h1v1h-1zM62 317h1v1h-1zM62 342h1v1h-1zM62 367h1v1h-1zM62 392h1v1h-1zM62 418h1v1h-1zM62 443h1v1h-1zM62 468h1v1h-1zM62 493h1v1h-1zM62 518h1v1h-1zM62 543h1v1h-1zM62 568h1v1h-1zM62 594h1v1h-1zM62 619h1v1h-1zM62 644h1v1h-1zM62 669h1v1h-1zM62 694h1v1h-1zM62 719h1v1h-1zM62 744h1v1h-1zM88 15h1v1h-1zM88 40h1v1h-1zM88 65h1v1h-1zM88 91h1v1h-1zM88 116h1v1h-1zM88 141h1v1h-1zM88 166h1v1h-1zM88 191h1v1h-1zM88 216h1v1h-1zM88 241h1v1h-1zM88 267h1v1h-1zM88 292h1v1h-1zM88 317h1v1h-1zM88 342h1v1h-1zM88 367h1v1h-1zM88 392h1v1h-1zM88 418h1v1h-1zM88 443h1v1h-1zM88 468h1v1h-1zM88 493h1v1h-1zM88 518h1v1h-1zM88 543h1v1h-1zM88 568h1v1h-1zM88 594h1v1h-1zM88 619h1v1h-1zM88 644h1v1h-1zM88 669h1v1h-1zM88 694h1v1h-1zM88 719h1v1h-1zM88 744h1v1h-1zM113 15h1v1h-1zM113 40h1v1h-1zM113 65h1v1h-1zM113 91h1v1h-1zM113 116h1v1h-1zM113 141h1v1h-1zM113 166h1v1h-1zM113 191h1v1h-1zM113 216h1v1h-1zM113 241h1v1h-1zM113 267h1v1h-1zM113 292h1v1h-1zM113 317h1v1h-1zM113 342h1v1h-1zM113 367h1v1h-1zM113 392h1v1h-1zM113 418h1v1h-1zM113 443h1v1h-1zM113 468h1v1h-1zM113 493h1v1h-1zM113 518h1v1h-1zM113 543h1v1h-1zM113 568h1v1h-1zM113 594h1v1h-1zM113 619h1v1h-1zM113 644h1v1h-1zM113 669h1v1h-1zM113 694h1v1h-1zM113 719h1v1h-1zM113 744h1v1h-1zM138 15h1v1h-1zM138 40h1v1h-1zM138 65h1v1h-1zM138 91h1v1h-1zM138 116h1v1h-1zM138 141h1v1h-1zM138 166h1v1h-1zM138 191h1v1h-1zM138 216h1v1h-1zM138 241h1v1h-1zM138 267h1v1h-1zM138 292h1v1h-1zM138 317h1v1h-1zM138 342h1v1h-1zM138 367h1v1h-1zM138 392h1v1h-1zM138 418h1v1h-1zM138 443h1v1h-1zM138 468h1v1h-1zM138 493h1v1h-1zM138 518h1v1h-1zM138 543h1v1h-1zM138 568h1v1h-1zM138 594h1v1h-1zM138 619h1v1h-1zM138 644h1v1h-1zM138 669h1v1h-1zM138 694h1v1h-1zM138 719h1v1h-1zM138 744h1v1h-1zM163 15h1v1h-1zM163 40h1v1h-1zM163 65h1v1h-1zM163 91h1v1h-1zM163 116h1v1h-1zM163 141h1v1h-1zM163 166h1v1h-1zM163 191h1v1h-1zM163 216h1v1h-1zM163 241h1v1h-1zM163 267h1v1h-1zM163 292h1v1h-1zM163 317h1v1h-1zM163 342h1v1h-1zM163 367h1v1h-1zM163 392h1v1h-1zM163 418h1v1h-1zM163 443h1v1h-1zM163 468h1v1h-1zM163 493h1v1h-1zM163 518h1v1h-1zM163 543h1v1h-1zM163 568h1v1h-1zM163 594h1v1h-1zM163 619h1v1h-1zM163 644h1v1h-1zM163 669h1v1h-1zM163 694h1v1h-1zM163 719h1v1h-1zM163 744h1v1h-1zM188 15h1v1h-1zM188 40h1v1h-1zM188 65h1v1h-1zM188 91h1v1h-1zM188 116h1v1h-1zM188 141h1v1h-1zM188 166h1v1h-1zM188 191h1v1h-1zM188 216h1v1h-1zM188 241h1v1h-1zM188 267h1v1h-1zM188 292h1v1h-1zM188 317h1v1h-1zM188 342h1v1h-1zM188 367h1v1h-1zM188 392h1v1h-1zM188 418h1v1h-1zM188 443h1v1h-1zM188 468h1v1h-1zM188 493h1v1h-1zM188 518h1v1h-1zM188 543h1v1h-1zM188 568h1v1h-1zM188 594h1v1h-1zM188 619h1v1h-1zM188 644h1v1h-1zM188 669h1v1h-1zM188 694h1v1h-1zM188 719h1v1h-1zM188 744h1v1h-1zM213 15h1v1h-1zM213 40h1v1h-1zM213 65h1v1h-1zM213 91h1v1h-1zM213 116h1v1h-1zM213 141h1v1h-1zM213 166h1v1h-1zM213 191h1v1h-1zM213 216h1v1h-1zM213 241h1v1h-1zM213 267h1v1h-1zM213 292h1v1h-1zM213 317h1v1h-1zM213 342h1v1h-1zM213 367h1v1h-1zM213 392h1v1h-1zM213 418h1v1h-1zM213 443h1v1h-1zM213 468h1v1h-1zM213 493h1v1h-1zM213 518h1v1h-1zM213 543h1v1h-1zM213 568h1v1h-1zM213 594h1v1h-1zM213 619h1v1h-1zM213 644h1v1h-1zM213 669h1v1h-1zM213 694h1v1h-1zM213 719h1v1h-1zM213 744h1v1h-1zM238 15h1v1h-1zM238 40h1v1h-1zM238 65h1v1h-1zM238 91h1v1h-1zM238 116h1v1h-1zM238 141h1v1h-1zM238 166h1v1h-1zM238 191h1v1h-1zM238 216h1v1h-1zM238 241h1v1h-1zM238 267h1v1h-1zM238 292h1v1h-1zM238 317h1v1h-1zM238 342h1v1h-1zM238 367h1v1h-1zM238 392h1v1h-1zM238 418h1v1h-1zM238 443h1v1h-1zM238 468h1v1h-1zM238 493h1v1h-1zM238 518h1v1h-1zM238 543h1v1h-1zM238 568h1v1h-1zM238 594h1v1h-1zM238 619h1v1h-1zM238 644h1v1h-1zM238 669h1v1h-1zM238 694h1v1h-1zM238 719h1v1h-1zM238 744h1v1h-1zM263 15h1v1h-1zM263 40h1v1h-1zM263 65h1v1h-1zM263 91h1v1h-1zM263 116h1v1h-1zM263 141h1v1h-1zM263 166h1v1h-1zM263 191h1v1h-1zM263 216h1v1h-1zM263 241h1v1h-1zM263 267h1v1h-1zM263 292h1v1h-1zM263 317h1v1h-1zM263 342h1v1h-1zM263 367h1v1h-1zM263 392h1v1h-1zM263 418h1v1h-1zM263 443h1v1h-1zM263 468h1v1h-1zM263 493h1v1h-1zM263 518h1v1h-1zM263 543h1v1h-1zM263 568h1v1h-1zM263 594h1v1h-1zM263 619h1v1h-1zM263 644h1v1h-1zM263 669h1v1h-1zM263 694h1v1h-1zM263 719h1v1h-1zM263 744h1v1h-1zM288 15h1v1h-1zM288 40h1v1h-1zM288 65h1v1h-1zM288 91h1v1h-1zM288 116h1v1h-1zM288 141h1v1h-1zM288 166h1v1h-1zM288 191h1v1h-1zM288 216h1v1h-1zM288 241h1v1h-1zM288 267h1v1h-1zM288 292h1v1h-1zM288 317h1v1h-1zM288 342h1v1h-1zM288 367h1v1h-1zM288 392h1v1h-1zM288 418h1v1h-1zM288 443h1v1h-1zM288 468h1v1h-1zM288 493h1v1h-1zM288 518h1v1h-1zM288 543h1v1h-1zM288 568h1v1h-1zM288 594h1v1h-1zM288 619h1v1h-1zM288 644h1v1h-1zM288 669h1v1h-1zM288 694h1v1h-1zM288 719h1v1h-1zM288 744h1v1h-1zM313 15h1v1h-1zM313 40h1v1h-1zM313 65h1v1h-1zM313 91h1v1h-1zM313 116h1v1h-1zM313 141h1v1h-1zM313 166h1v1h-1zM313 191h1v1h-1zM313 216h1v1h-1zM313 241h1v1h-1zM313 267h1v1h-1zM313 292h1v1h-1zM313 317h1v1h-1zM313 342h1v1h-1zM313 367h1v1h-1zM313 392h1v1h-1zM313 418h1v1h-1zM313 443h1v1h-1zM313 468h1v1h-1zM313 493h1v1h-1zM313 518h1v1h-1zM313 543h1v1h-1zM313 568h1v1h-1zM313 594h1v1h-1zM313 619h1v1h-1zM313 644h1v1h-1zM313 669h1v1h-1zM313 694h1v1h-1zM313 719h1v1h-1zM313 744h1v1h-1zM339 15h1v1h-1zM339 40h1v1h-1zM339 65h1v1h-1zM339 91h1v1h-1zM339 116h1v1h-1zM339 141h1v1h-1zM339 166h1v1h-1zM339 191h1v1h-1zM339 543h1v1h-1zM339 568h1v1h-1zM339 594h1v1h-1zM339 619h1v1h-1zM339 644h1v1h-1zM339 669h1v1h-1zM339 694h1v1h-1zM339 719h1v1h-1zM339 744h1v1h-1zM364 15h1v1h-1zM364 40h1v1h-1zM364 65h1v1h-1zM364 91h1v1h-1zM364 116h1v1h-1zM364 141h1v1h-1zM364 166h1v1h-1zM364 191h1v1h-1zM364 543h1v1h-1zM364 568h1v1h-1zM364 594h1v1h-1zM364 619h1v1h-1zM364 644h1v1h-1zM364 669h1v1h-1zM364 694h1v1h-1zM364 719h1v1h-1zM364 744h1v1h-1zM389 15h1v1h-1zM389 40h1v1h-1zM389 65h1v1h-1zM389 91h1v1h-1zM389 116h1v1h-1zM389 141h1v1h-1zM389 166h1v1h-1zM389 191h1v1h-1zM389 543h1v1h-1zM389 568h1v1h-1zM389 594h1v1h-1zM389 619h1v1h-1zM389 644h1v1h-1zM389 669h1v1h-1zM389 694h1v1h-1zM389 719h1v1h-1zM389 744h1v1h-1zM414 15h1v1h-1zM414 40h1v1h-1zM414 65h1v1h-1zM414 91h1v1h-1zM414 116h1v1h-1zM414 141h1v1h-1zM414 166h1v1h-1zM414 191h1v1h-1zM414 543h1v1h-1zM414 568h1v1h-1zM414 594h1v1h-1zM414 619h1v1h-1zM414 644h1v1h-1zM414 669h1v1h-1zM414 694h1v1h-1zM414 719h1v1h-1zM414 744h1v1h-1zM439 15h1v1h-1zM439 40h1v1h-1zM439 65h1v1h-1zM439 91h1v1h-1zM439 116h1v1h-1zM439 141h1v1h-1zM439 166h1v1h-1zM439 191h1v1h-1zM439 543h1v1h-1zM439 568h1v1h-1zM439 594h1v1h-1zM439 619h1v1h-1zM439 644h1v1h-1zM439 669h1v1h-1zM439 694h1v1h-1zM439 719h1v1h-1zM439 744h1v1h-1zM464 15h1v1h-1zM464 40h1v1h-1zM464 65h1v1h-1zM464 91h1v1h-1zM464 116h1v1h-1zM464 141h1v1h-1zM464 166h1v1h-1zM464 191h1v1h-1zM464 543h1v1h-1zM464 568h1v1h-1zM464 594h1v1h-1zM464 619h1v1h-1zM464 644h1v1h-1zM464 669h1v1h-1zM464 694h1v1h-1zM464 719h1v1h-1zM464 744h1v1h-1zM489 15h1v1h-1zM489 40h1v1h-1zM489 65h1v1h-1zM489 91h1v1h-1zM489 116h1v1h-1zM489 141h1v1h-1zM489 166h1v1h-1zM489 191h1v1h-1zM489 543h1v1h-1zM489 568h1v1h-1zM489 594h1v1h-1zM489 619h1v1h-1zM489 644h1v1h-1zM489 669h1v1h-1zM489 694h1v1h-1zM489 719h1v1h-1zM489 744h1v1h-1zM514 15h1v1h-1zM514 40h1v1h-1zM514 65h1v1h-1zM514 91h1v1h-1zM514 116h1v1h-1zM514 141h1v1h-1zM514 166h1v1h-1zM514 191h1v1h-1zM514 543h1v1h-1zM514 568h1v1h-1zM514 594h1v1h-1zM514 619h1v1h-1zM514 644h1v1h-1zM514 669h1v1h-1zM514 694h1v1h-1zM514 719h1v1h-1zM514 744h1v1h-1zM539 15h1v1h-1zM539 40h1v1h-1zM539 65h1v1h-1zM539 91h1v1h-1zM539 116h1v1h-1zM539 141h1v1h-1zM539 166h1v1h-1zM539 191h1v1h-1zM539 543h1v1h-1zM539 568h1v1h-1zM539 594h1v1h-1zM539 619h1v1h-1zM539 644h1v1h-1zM539 669h1v1h-1zM539 694h1v1h-1zM539 719h1v1h-1zM539 744h1v1h-1zM564 15h1v1h-1zM564 40h1v1h-1zM564 65h1v1h-1zM564 91h1v1h-1zM564 116h1v1h-1zM564 141h1v1h-1zM564 166h1v1h-1zM564 191h1v1h-1zM564 543h1v1h-1zM564 568h1v1h-1zM564 594h1v1h-1zM564 619h1v1h-1zM564 644h1v1h-1zM564 669h1v1h-1zM564 694h1v1h-1zM564 719h1v1h-1zM564 744h1v1h-1zM590 15h1v1h-1zM590 40h1v1h-1zM590 65h1v1h-1zM590 91h1v1h-1zM590 116h1v1h-1zM590 141h1v1h-1zM590 166h1v1h-1zM590 191h1v1h-1zM590 543h1v1h-1zM590 568h1v1h-1zM590 594h1v1h-1zM590 619h1v1h-1zM590 644h1v1h-1zM590 669h1v1h-1zM590 694h1v1h-1zM590 719h1v1h-1zM590 744h1v1h-1zM615 15h1v1h-1zM615 40h1v1h-1zM615 65h1v1h-1zM615 91h1v1h-1zM615 116h1v1h-1zM615 141h1v1h-1zM615 166h1v1h-1zM615 191h1v1h-1zM615 543h1v1h-1zM615 568h1v1h-1zM615 594h1v1h-1zM615 619h1v1h-1zM615 644h1v1h-1zM615 669h1v1h-1zM615 694h1v1h-1zM615 719h1v1h-1zM615 744h1v1h-1zM640 15h1v1h-1zM640 40h1v1h-1zM640 65h1v1h-1zM640 91h1v1h-1zM640 116h1v1h-1zM640 141h1v1h-1zM640 166h1v1h-1zM640 191h1v1h-1zM640 543h1v1h-1zM640 568h1v1h-1zM640 594h1v1h-1zM640 619h1v1h-1zM640 644h1v1h-1zM640 669h1v1h-1zM640 694h1v1h-1zM640 719h1v1h-1zM640 744h1v1h-1zM665 15h1v1h-1zM665 40h1v1h-1zM665 65h1v1h-1zM665 91h1v1h-1zM665 116h1v1h-1zM665 141h1v1h-1zM665 166h1v1h-1zM665 191h1v1h-1zM665 216h1v1h-1zM665 241h1v1h-1zM665 267h1v1h-1zM665 292h1v1h-1zM665 317h1v1h-1zM665 342h1v1h-1zM665 367h1v1h-1zM665 392h1v1h-1zM665 418h1v1h-1zM665 443h1v1h-1zM665 468h1v1h-1zM665 493h1v1h-1zM665 518h1v1h-1zM665 543h1v1h-1zM665 568h1v1h-1zM665 594h1v1h-1zM665 619h1v1h-1zM665 644h1v1h-1zM665 669h1v1h-1zM665 694h1v1h-1zM665 719h1v1h-1zM665 744h1v1h-1zM690 15h1v1h-1zM690 40h1v1h-1zM690 65h1v1h-1zM690 91h1v1h-1zM690 116h1v1h-1zM690 141h1v1h-1zM690 166h1v1h-1zM690 191h1v1h-1zM690 216h1v1h-1zM690 241h1v1h-1zM690 267h1v1h-1zM690 292h1v1h-1zM690 317h1v1h-1zM690 342h1v1h-1zM690 367h1v1h-1zM690 392h1v1h-1zM690 418h1v1h-1zM690 443h1v1h-1zM690 468h1v1h-1zM690 493h1v1h-1zM690 518h1v1h-1zM690 543h1v1h-1zM690 568h1v1h-1zM690 594h1v1h-1zM690 619h1v1h-1zM690 644h1v1h-1zM690 669h1v1h-1zM690 694h1v1h-1zM690 719h1v1h-1zM690 744h1v1h-1z" fill="#c2c2c2"/><path d="M339 216h1v1h-1zM339 241h1v1h-1zM339 267h1v1h-1zM339 292h1v1h-1zM339 317h1v1h-1zM339 342h1v1h-1zM339 367h1v1h-1zM339 392h1v1h-1zM339 418h1v1h-1zM339 443h1v1h-1zM339 468h1v1h-1zM339 493h1v1h-1zM339 518h1v1h-1zM364 216h1v1h-1zM364 241h1v1h-1zM364 267h1v1h-1zM364 292h1v1h-1zM364 317h1v1h-1zM364 342h1v1h-1zM364 367h1v1h-1zM364 392h1v1h-1zM364 418h1v1h-1zM364 443h1v1h-1zM364 468h1v1h-1zM364 493h1v1h-1zM364 518h1v1h-1zM389 216h1v1h-1zM389 241h1v1h-1zM389 267h1v1h-1zM389 292h1v1h-1zM389 317h1v1h-1zM389 342h1v1h-1zM389 367h1v1h-1zM389 392h1v1h-1zM389 418h1v1h-1zM389 443h1v1h-1zM389 468h1v1h-1zM389 493h1v1h-1zM389 518h1v1h-1zM414 216h1v1h-1zM414 241h1v1h-1zM414 267h1v1h-1zM414 292h1v1h-1zM414 317h1v1h-1zM414 342h1v1h-1zM414 367h1v1h-1zM414 392h1v1h-1zM414 418h1v1h-1zM414 443h1v1h-1zM414 468h1v1h-1zM414 493h1v1h-1zM414 518h1v1h-1zM439 216h1v1h-1zM439 241h1v1h-1zM439 267h1v1h-1zM439 292h1v1h-1zM439 317h1v1h-1zM439 342h1v1h-1zM439 367h1v1h-1zM439 392h1v1h-1zM439 418h1v1h-1zM439 443h1v1h-1zM439 468h1v1h-1zM439 493h1v1h-1zM439 518h1v1h-1zM464 216h1v1h-1zM464 241h1v1h-1zM464 267h1v1h-1zM464 292h1v1h-1zM464 317h1v1h-1zM464 342h1v1h-1zM464 367h1v1h-1zM464 392h1v1h-1zM464 418h1v1h-1zM464 443h1v1h-1zM464 468h1v1h-1zM464 493h1v1h-1zM464 518h1v1h-1zM489 216h1v1h-1zM489 241h1v1h-1zM489 267h1v1h-1zM489 292h1v1h-1zM489 317h1v1h-1zM489 342h1v1h-1zM489 367h1v1h-1zM489 392h1v1h-1zM489 418h1v1h-1zM489 443h1v1h-1zM489 468h1v1h-1zM489 493h1v1h-1zM489 518h1v1h-1zM514 216h1v1h-1zM514 241h1v1h-1zM514 267h1v1h-1zM514 292h1v1h-1zM514 317h1v1h-1zM514 342h1v1h-1zM514 367h1v1h-1zM514 392h1v1h-1zM514 418h1v1h-1zM514 443h1v1h-1zM514 468h1v1h-1zM514 493h1v1h-1zM514 518h1v1h-1zM539 216h1v1h-1zM539 241h1v1h-1zM539 267h1v1h-1zM539 292h1v1h-1zM539 317h1v1h-1zM539 342h1v1h-1zM539 367h1v1h-1zM539 392h1v1h-1zM539 418h1v1h-1zM539 443h1v1h-1zM539 468h1v1h-1zM539 493h1v1h-1zM539 518h1v1h-1zM564 216h1v1h-1zM564 241h1v1h-1zM564 267h1v1h-1zM564 292h1v1h-1zM564 317h1v1h-1zM564 342h1v1h-1zM564 367h1v1h-1zM564 392h1v1h-1zM564 418h1v1h-1zM564 443h1v1h-1zM564 468h1v1h-1zM564 493h1v1h-1zM564 518h1v1h-1zM590 216h1v1h-1zM590 241h1v1h-1zM590 267h1v1h-1zM590 292h1v1h-1zM590 317h1v1h-1zM590 342h1v1h-1zM590 367h1v1h-1zM590 392h1v1h-1zM590 418h1v1h-1zM590 443h1v1h-1zM590 468h1v1h-1zM590 493h1v1h-1zM590 518h1v1h-1zM615 216h1v1h-1zM615 241h1v1h-1zM615 267h1v1h-1zM615 292h1v1h-1zM615 317h1v1h-1zM615 342h1v1h-1zM615 367h1v1h-1zM615 392h1v1h-1zM615 418h1v1h-1zM615 443h1v1h-1zM615 468h1v1h-1zM615 493h1v1h-1zM615 518h1v1h-1zM640 216h1v1h-1zM640 241h1v1h-1zM640 267h1v1h-1zM640 292h1v1h-1zM640 317h1v1h-1zM640 342h1v1h-1zM640 367h1v1h-1zM640 392h1v1h-1zM640 418h1v1h-1zM640 443h1v1h-1zM640 468h1v1h-1zM640 493h1v1h-1zM640 518h1v1h-1z" fill="#adadad"/><g transform="translate(490.5 367.5)" fill="none" stroke="#c822c8" stroke-width="1" shape-rendering="crispEdges"><path d="M-44.50 107.34A116.2 116.2 0 0 0 44.50 107.34L44.50 157.12A163.3 163.3 0 0 1 -44.50 157.12Z" transform="rotate(0.0000)"/><path d="M-44.50 107.34A116.2 116.2 0 0 0 44.50 107.34L44.50 157.12A163.3 163.3 0 0 1 -44.50 157.12Z" transform="rotate(51.4286)"/><path d="M-44.50 107.34A116.2 116.2 0 0 0 44.50 107.34L44.50 157.12A163.3 163.3 0 0 1 -44.50 157.12Z" transform="rotate(102.8571)"/><path d="M-44.50 107.34A116.2 116.2 0 0 0 44.50 107.34L44.50 157.12A163.3 163.3 0 0 1 -44.50 157.12Z" transform="rotate(154.2857)"/><path d="M-44.50 107.34A116.2 116.2 0 0 0 44.50 107.34L44.50 157.12A163.3 163.3 0 0 1 -44.50 157.12Z" transform="rotate(205.7143)"/><path d="M-44.50 107.34A116.2 116.2 0 0 0 44.50 107.34L44.50 157.12A163.3 163.3 0 0 1 -44.50 157.12Z" transform="rotate(257.1429)"/><path d="M-44.50 107.34A116.2 116.2 0 0 0 44.50 107.34L44.50 157.12A163.3 163.3 0 0 1 -44.50 157.12Z" transform="rotate(308.5714)"/></g><rect x="0" y="0" width="699" height="1" fill="#000"/><rect x="0" y="0" width="1" height="768" fill="#000"/></svg>
<div class="a" style="left:275px;top:868px;width:699px;height:13px;background:#fcfcfb;border-left:1px solid #000"></div>
<div class="a" style="left:276px;top:868px;width:14px;height:13px;background:linear-gradient(#f6f5f1,#e6e4dc);border:1px solid #fff;border-right-color:#c9c7bd"></div>
<svg class="a" style="left:280px;top:871px" width="5" height="7"><path d="M4.5 0.5L1 3.5L4.5 6.5" fill="none" stroke="#333" stroke-width="1.4"/></svg>
<div class="a" style="left:558px;top:869px;width:400px;height:12px;background:linear-gradient(#f3f2ee,#e4e2da);border:1px solid #c5c3b9;border-radius:2px"></div>
<div class="a" style="left:753px;top:872px;width:1px;height:6px;background:#8f8d85"></div>
<div class="a" style="left:755px;top:872px;width:1px;height:6px;background:#8f8d85"></div>
<div class="a" style="left:757px;top:872px;width:1px;height:6px;background:#8f8d85"></div>
<div class="a" style="left:759px;top:872px;width:1px;height:6px;background:#8f8d85"></div>
<div class="a" style="left:974px;top:44px;width:4px;height:837px;background:#f1efe8"></div>
<div class="a" style="left:976px;top:44px;width:282px;height:23px;background:linear-gradient(#f4f4f3,#ebebea 50%,#e2e2e0)"></div>
<div class="a" style="left:981px;top:49px;width:2px;height:2px;background:#b9b9b4"></div>
<div class="a" style="left:981px;top:52px;width:2px;height:2px;background:#b9b9b4"></div>
<div class="a" style="left:981px;top:55px;width:2px;height:2px;background:#b9b9b4"></div>
<div class="a" style="left:981px;top:58px;width:2px;height:2px;background:#b9b9b4"></div>
<div class="a" style="left:981px;top:61px;width:2px;height:2px;background:#b9b9b4"></div>
<div class="t b" style="left:992px;top:50px;letter-spacing:0.129px;">Обработка</div>
<svg class="a" style="left:1224px;top:48px" width="15" height="15" viewBox="0 0 17 17"><rect x="0.5" y="0.5" width="16" height="16" fill="#d4e0f8" stroke="#0c1030"/><rect x="0.5" y="0.5" width="4" height="16" fill="#fff" stroke="#0c1030"/><path d="M16 6H11V2.5L5 8.5L11 14.5V11H16Z" fill="#2a6ad8" stroke="#1c3c9a" stroke-width=".6"/></svg>
<svg class="a" style="left:1242px;top:50px" width="11" height="9" viewBox="0 0 11 9" ><path d="M4.5 2H9.5V6H4.5ZM4.5 5H9.5M4 0.5V7.5M0 4H4" fill="none" stroke="#000" stroke-width="1"/></svg>
<div class="a" style="left:978px;top:67px;width:280px;height:814px;background:#516171"></div>
<div class="a" style="left:1258px;top:44px;width:22px;height:837px;background:#fbfaf7"></div>
<div class="a" style="left:1260px;top:46px;width:20px;height:68px;background:#f2f0e9;border:1px solid #c9c7bd;border-right:none;border-radius:3px 0 0 3px"></div>
<div class="t" style="left:1264px;top:51px;transform-origin:0 0;transform:translate(13px,0) rotate(90deg);letter-spacing:.1px">Обработка</div>
<div class="card" style="left:993px;top:76px;width:252px;height:38px"></div>
<svg class="a" style="left:998px;top:80px" width="34" height="30" viewBox="0 0 34 30" ><path d="M1 9L20 1L33 18L33 22L13 29L1 13Z" fill="#c99a78"/><path d="M1 9L20 1L33 18L13 25Z" fill="#e9c4a6"/><path d="M1 9L13 25V29L1 13Z" fill="#a87a5a"/><path d="M13 25L33 18V22L13 29Z" fill="#b88a68"/><path d="M6 9.5L19 4L28 16.5L14.5 21.5Z" fill="#5a3a2a"/><path d="M7.5 10.5L19 5.5L27 16.5L15 21Z" fill="#d8b090"/></svg>
<div class="t b" style="left:1043px;top:90px;letter-spacing:0.092px;">Фрезеровка выемки</div>
<div class="card" style="left:993px;top:123px;width:252px;height:85px"></div>
<div class="t b" style="left:999px;top:125px;letter-spacing:0.087px;">Глубина выемки</div>
<svg class="a" style="left:999px;top:148px" width="40" height="26" viewBox="0 0 40 26" ><path d="M11.5 1.5H16.5V9.5H23.5V17.5H31.5V9.5H38.5V24.5H11.5Z" fill="#a4a4a4" stroke="#000" stroke-width="1"/><path d="M12 8L16 3M12 14L17 9M12 20L23 10M13 24L23 15M18 24L25 18M23 24L31 17M28 24L38 14M33 24L38 19" stroke="#6e6e6e" stroke-width=".7"/><path d="M2.5 1.5H11M2.5 9.5H11M2.500 17.5H11" stroke="#000" stroke-width="1" stroke-dasharray="1 1"/><text x="0" y="8" font-family="Liberation Sans,sans-serif" font-size="6" fill="#000">D</text><text x="0" y="16" font-family="Liberation Sans,sans-serif" font-size="6" fill="#000">C</text></svg>
<div class="t " style="left:1045px;top:143px;letter-spacing:-0.084px;">Начальная (D)</div>
<div class="inp" style="left:1139px;top:139px;width:54px;border-color:#a9b0b8">0.0</div>
<div class="t " style="left:1198px;top:141px;">мм</div>
<div class="t " style="left:1045px;top:166px;letter-spacing:0.07px;">Конечная (C)</div>
<div class="inp" style="left:1139px;top:162px;width:54px;border-color:#a9b0b8">2.0</div>
<div class="t " style="left:1198px;top:164px;">мм</div>
<div class="cb" style="left:1000px;top:187px"></div>
<svg class="a" style="left:1002px;top:189px" width="9" height="9"><path d="M1 4L3.5 6.5L8 1.5" fill="none" stroke="#5a5a5a" stroke-width="1.8"/></svg>
<div class="t b" style="left:1016px;top:188px;letter-spacing:0.143px;">Дополнительные настройки</div>
<div class="card" style="left:993px;top:212px;width:252px;height:80px"></div>
<div class="a" style="left:1002px;top:218px;width:4px;height:18px;background:linear-gradient(90deg,#7e6e34,#ebe3a4 45%,#a8984e);border-top:1px solid #8a7a3a;border-bottom:1px solid #8a7a3a;box-shadow:1px 1px 2px rgba(120,100,60,.35)"></div>
<div class="t b" style="left:1014px;top:219px;letter-spacing:0.282px;">Инструмент:</div>
<div class="t " style="left:1096px;top:219px;letter-spacing:0.191px;">Кукуруза (1.5 mm) гетинакс</div>
<div class="btn" style="left:1067px;top:238px;width:64px;height:17px;line-height:15px">Выбрать...</div>
<div class="btn" style="left:1134px;top:238px;width:101px;height:17px;line-height:15px">Редактировать...</div>
<div class="sep" style="left:1000px;top:261px;width:239px"></div>
<div class="t b" style="left:999px;top:271px;">Проходов</div>
<div class="t " style="left:1055px;top:271px;">:</div>
<div class="t " style="left:1069px;top:271px;">2</div>
<div class="btn" style="left:1093px;top:267px;width:140px;height:18px;line-height:16px">Изменить ...</div>
<div class="card" style="left:993px;top:299px;width:252px;height:102px"></div>
<div class="cb" style="left:1000px;top:304px"></div>
<div class="t b" style="left:1015px;top:305px;letter-spacing:0.318px;">Использовать черновую обработку</div>
<div class="a" style="left:1008px;top:324px;width:4px;height:17px;background:linear-gradient(90deg,#7e6e34,#ebe3a4 45%,#a8984e);border-top:1px solid #8a7a3a;border-bottom:1px solid #8a7a3a;box-shadow:1px 1px 2px rgba(120,100,60,.35)"></div>
<div class="t g" style="left:1020px;top:327px;letter-spacing:0.086px;">Не использовать черновую обработку</div>
<div class="btn dis" style="left:1067px;top:346px;width:64px;height:17px;line-height:15px">Выбрать...</div>
<div class="btn dis" style="left:1134px;top:346px;width:101px;height:17px;line-height:15px">Редактировать...</div>
<div class="sep" style="left:1000px;top:368px;width:239px"></div>
<div class="t b g" style="left:999px;top:377px;">Проходов:</div>
<div class="t g" style="left:1069px;top:377px;">0</div>
<div class="btn dis" style="left:1093px;top:375px;width:140px;height:17px;line-height:15px">Изменить ...</div>
<div class="card" style="left:993px;top:405px;width:252px;height:185px"></div>
<div class="t b" style="left:1000px;top:410px;letter-spacing:0.234px;">Проход выемки</div>
<div class="rd" style="left:1007px;top:427px"></div>
<div class="a" style="left:1010.5px;top:430.5px;width:5px;height:5px;border-radius:50%;background:#555"></div>
<div class="t b" style="left:1023px;top:427px;letter-spacing:-0.188px;">Спираль</div>
<div class="rd" style="left:1082px;top:427px"></div>
<div class="t b" style="left:1098px;top:427px;letter-spacing:0.075px;">Растр</div>
<svg class="a" style="left:1016px;top:451px" width="46" height="46" viewBox="0 0 46 46" ><rect x="0.5" y="0.5" width="45" height="45" fill="#fff" stroke="#2a2a2a"/><g fill="none" stroke="#cc2424" stroke-width="1"><path d="M39.5 22.5V6.5H6.5V39.5H24"/><rect x="10.5" y="10.5" width="25" height="25"/><rect x="14.5" y="14.5" width="17" height="17"/><rect x="18.5" y="18.5" width="9" height="9"/><path d="M24 20.800H22.500V24.200H24M22.500 22.500H39.500"/></g><circle cx="7.5" cy="39" r="4.8" fill="#f4f2dc" stroke="#dfe4d0" stroke-width=".8" opacity=".9"/><circle cx="13.3" cy="39" r="4.800" fill="#f2eec0" stroke="#cfd4b0" stroke-width=".8" opacity=".9"/><circle cx="19.200" cy="39" r="4.800" fill="#f0ecb0" stroke="#b9c098" stroke-width=".8" opacity=".9"/><circle cx="26.600" cy="39.200" r="5.200" fill="#e2e07a" stroke="#6e7a2c" stroke-width="1"/></svg>
<div class="a" style="left:1018px;top:497px;width:46px;height:2px;background:linear-gradient(#d0d0d0,#fff)"></div>
<div class="t " style="left:1081px;top:450px;">Подача</div>
<div class="rd" style="left:1088px;top:468px"></div>
<div class="a" style="left:1091.5px;top:471.5px;width:5px;height:5px;border-radius:50%;background:#555"></div>
<div class="t " style="left:1103px;top:468px;">Попутная</div>
<div class="rd" style="left:1088px;top:488px"></div>
<div class="t " style="left:1103px;top:489px;">Встречная</div>
<div class="t g" style="left:1008px;top:512px;">Наклон растра</div>
<div class="inp g" style="left:1102px;top:508px;width:36px;border-color:#c9ccd0">0.0</div>
<div class="t g" style="left:1143px;top:512px;letter-spacing:0.353px;">град.</div>
<div class="t g" style="left:1006px;top:540px;letter-spacing:0.167px;">Проход контура</div>
<div class="a g" style="left:1102px;top:535px;width:137px;height:20px;border:1px solid #c5cad0;border-radius:2px;background:#fff;padding:3px 0 0 3px;line-height:13px">Последний</div>
<div class="a" style="left:1223px;top:537px;width:14px;height:16px;background:linear-gradient(#f4f3ef,#e2e0d8);border-radius:2px"></div>
<svg class="a" style="left:1226px;top:542px" width="9" height="6"><path d="M1 1L4.5 4.5L8 1" fill="none" stroke="#c2c2be" stroke-width="1.6"/></svg>
<div class="sep" style="left:997px;top:561px;width:240px"></div>
<div class="t " style="left:1045px;top:572px;letter-spacing:-0.147px;">Припуск</div>
<div class="inp" style="left:1102px;top:568px;width:41px;border-color:#a9b0b8">0.0</div>
<div class="t " style="left:1147px;top:572px;">мм</div>
<div class="card" style="left:993px;top:597px;width:252px;height:52px"></div>
<svg class="a" style="left:1003px;top:603px" width="28" height="45" viewBox="0 0 28 45" ><path d="M4.5 1.5H15.500M4.500 0V3M15.500 0V3" stroke="#000" stroke-width="1.2"/><path d="M15.500 3V38M4.500 3V7" stroke="#000" stroke-width="1" stroke-dasharray="1.500 1.500"/><rect x="2" y="6.300" width="3.600" height="13.300" fill="#cdb868" stroke="#9a8440" stroke-width=".7"/><path d="M4.300 20.600L14.700 28.600L4.300 38.100" fill="none" stroke="#c8283c" stroke-width="1.500"/><path d="M2 38.500H26.700" stroke="#000" stroke-width="1.200"/><path d="M5 41.500H27" stroke="#cfcfcf" stroke-width="1.500"/></svg>
<div class="cb" style="left:1036px;top:603px"></div>
<svg class="a" style="left:1038px;top:605px" width="9" height="9"><path d="M1 4L3.5 6.5L8 1.5" fill="none" stroke="#5a5a5a" stroke-width="1.8"/></svg>
<div class="t " style="left:1052px;top:604px;">Заход зигзагом</div>
<div class="t " style="left:1042px;top:629px;">Дистанция</div>
<div class="inp" style="left:1100px;top:625px;width:41px;border-color:#a9b0b8">5.0</div>
<div class="t " style="left:1147px;top:629px;">мм</div>
<div class="card" style="left:993px;top:655px;width:252px;height:25px"></div>
<div class="cb" style="left:1000px;top:661px"></div>
<div class="t b" style="left:1015px;top:662px;letter-spacing:0.258px;">В порядке выделения векторов</div>
<div class="card" style="left:993px;top:686px;width:252px;height:117px"></div>
<div class="t " style="left:1000px;top:691px;letter-spacing:-0.187px;">Безопасная Z</div>
<div class="t " style="left:1081px;top:691px;">5.0 мм</div>
<div class="t " style="left:1000px;top:707px;">Парковка</div>
<div class="t " style="left:1081px;top:707px;letter-spacing:0.094px;">X:0.00 Y:0.00 Z:20.00</div>
<div class="cb" style="left:1001px;top:725px"></div>
<div class="t b" style="left:1016px;top:726px;letter-spacing:0.213px;">Наложить траекторию на 3D модель</div>
<div class="sep" style="left:997px;top:743px;width:240px"></div>
<div class="t " style="left:999px;top:752px;letter-spacing:0.119px;">Выбор вектора: Вручную</div>
<div class="btn" style="left:1171px;top:750px;width:67px;height:17px;line-height:15px">Выбрать...</div>
<div class="sep" style="left:997px;top:771px;width:240px"></div>
<div class="t " style="left:1000px;top:782px;">Имя:</div>
<div class="inp" style="left:1030px;top:777px;width:209px;border-color:#a9b0b8">Выемка 8</div>
<div class="btn" style="left:993px;top:812px;width:73px;height:19px;line-height:17px">Вычислить</div>
<div class="btn" style="left:1172px;top:812px;width:73px;height:19px;line-height:17px">Закрыть</div>
<div class="a" style="left:0;top:881px;width:1280px;height:19px;background:linear-gradient(#e9e7de 0,#f3f1ea 3px,#efede5)"></div>
<div class="t " style="left:2px;top:886px;">Готов</div>
<div class="t " style="left:782px;top:886px;">X:&nbsp; 4.7555 Y: 18.8608</div>
<div class="a" style="left:961px;top:884px;width:1px;height:14px;background:#a9a79d"></div>
<div class="t " style="left:967px;top:886px;">W:17.475&nbsp;&nbsp; H:17.169&nbsp; L:3</div>
<div class="a" style="left:0;top:900px;width:1280px;height:24px;background:linear-gradient(#3d5180 0,#93a6ca 1px,#8399c2 4px,#6c84b2 12px,#5b73a4 20px,#4f6798 24px)"></div>
<svg class="a" style="left:24px;top:903px" width="20" height="18" viewBox="0 0 20 18" ><g fill="none" stroke="#b9c6de" stroke-width="1.3" transform="skewX(-10) translate(4 0)"><path d="M1 2Q4 0.5 7.500 2V7.500Q4 6 1 7.500Z"/><path d="M9.5 2Q12.500 3.500 16 2V7.500Q12.500 9 9.5 7.500Z"/><path d="M1 10Q4 8.500 7.500 10V15.500Q4 14 1 15.500Z"/><path d="M9.5 10Q12.500 11.500 16 10V15.500Q12.500 17 9.5 15.500Z"/></g></svg>
<div class="a" style="left:64px;top:902px;width:156px;height:20px;border-radius:4px;background:linear-gradient(#475f90,#546c9e);border:1px solid #7d93bd;box-shadow:inset 0 1px 2px rgba(20,30,60,.5)"></div>
<svg class="a" style="left:76px;top:906px" width="9" height="13" viewBox="0 0 9 13" ><path d="M7.500 0.500C4.500 3 1.500 7 1 12.500C2.800 10.300 4 9 6 7.500C5 7.700 4.400 8 3.600 8.500C5 6 6.800 3.800 7.500 0.500Z" fill="#c02040"/></svg>
<div class="t " style="left:93px;top:907px;color:#fff">Aspire 9.007 {Jogyba...</div>
<div class="a" style="left:1139px;top:904px;width:16px;height:16px;background:#5c7399"></div>
<div class="t " style="left:1141px;top:906px;color:#fff">EN</div>
<div class="a" style="left:1168px;top:902px;width:110px;height:20px;border-radius:5px;background:linear-gradient(#4a6292,#566ea0);border:1px solid #7d93bd;box-shadow:inset 0 1px 2px rgba(20,30,60,.5)"></div>
<svg class="a" style="left:1175px;top:904px" width="16" height="16" viewBox="0 0 16 16" ><rect width="16" height="16" rx="1.500" fill="#f07a1e"/><path d="M4 12.500H12M5 10.500H11" stroke="#fff" stroke-width="1.200"/><path d="M9 2Q6 5 8.500 6.500Q11 8 8 9.500M11 4Q9.500 5.500 11 6.500" fill="none" stroke="#fff" stroke-width="1.200"/></svg>
<svg class="a" style="left:1193px;top:904px" width="16" height="17" viewBox="0 0 16 17" ><circle cx="7" cy="7.500" r="6" fill="#6a6e78" stroke="#2a2e38" stroke-width="1"/><circle cx="5.500" cy="6" r="3" fill="#c9cdd6"/><circle cx="8" cy="8" r="3.500" fill="none" stroke="#9a9ea8" stroke-width="1"/><path d="M9 16L14 10" stroke="#93a6ca" stroke-width="1"/></svg>
<svg class="a" style="left:1211px;top:904px" width="17" height="17" viewBox="0 0 17 17" ><path d="M8 1L14 4V10L8 13L2 10V4Z" fill="#e8eef8" stroke="#2a3a6a" stroke-width="1"/><path d="M2 4L8 7L14 4M8 7V13" stroke="#2a3a6a" stroke-width="1" fill="none"/><path d="M2 4L8 7V13L2 10Z" fill="#3a5aa8"/><circle cx="12.500" cy="13" r="2.800" fill="#f4d03a"/></svg>
<div class="t b" style="left:1235px;top:906px;color:#fff;font-size:11px;letter-spacing:-0.25px">10:55</div>
</body></html>
